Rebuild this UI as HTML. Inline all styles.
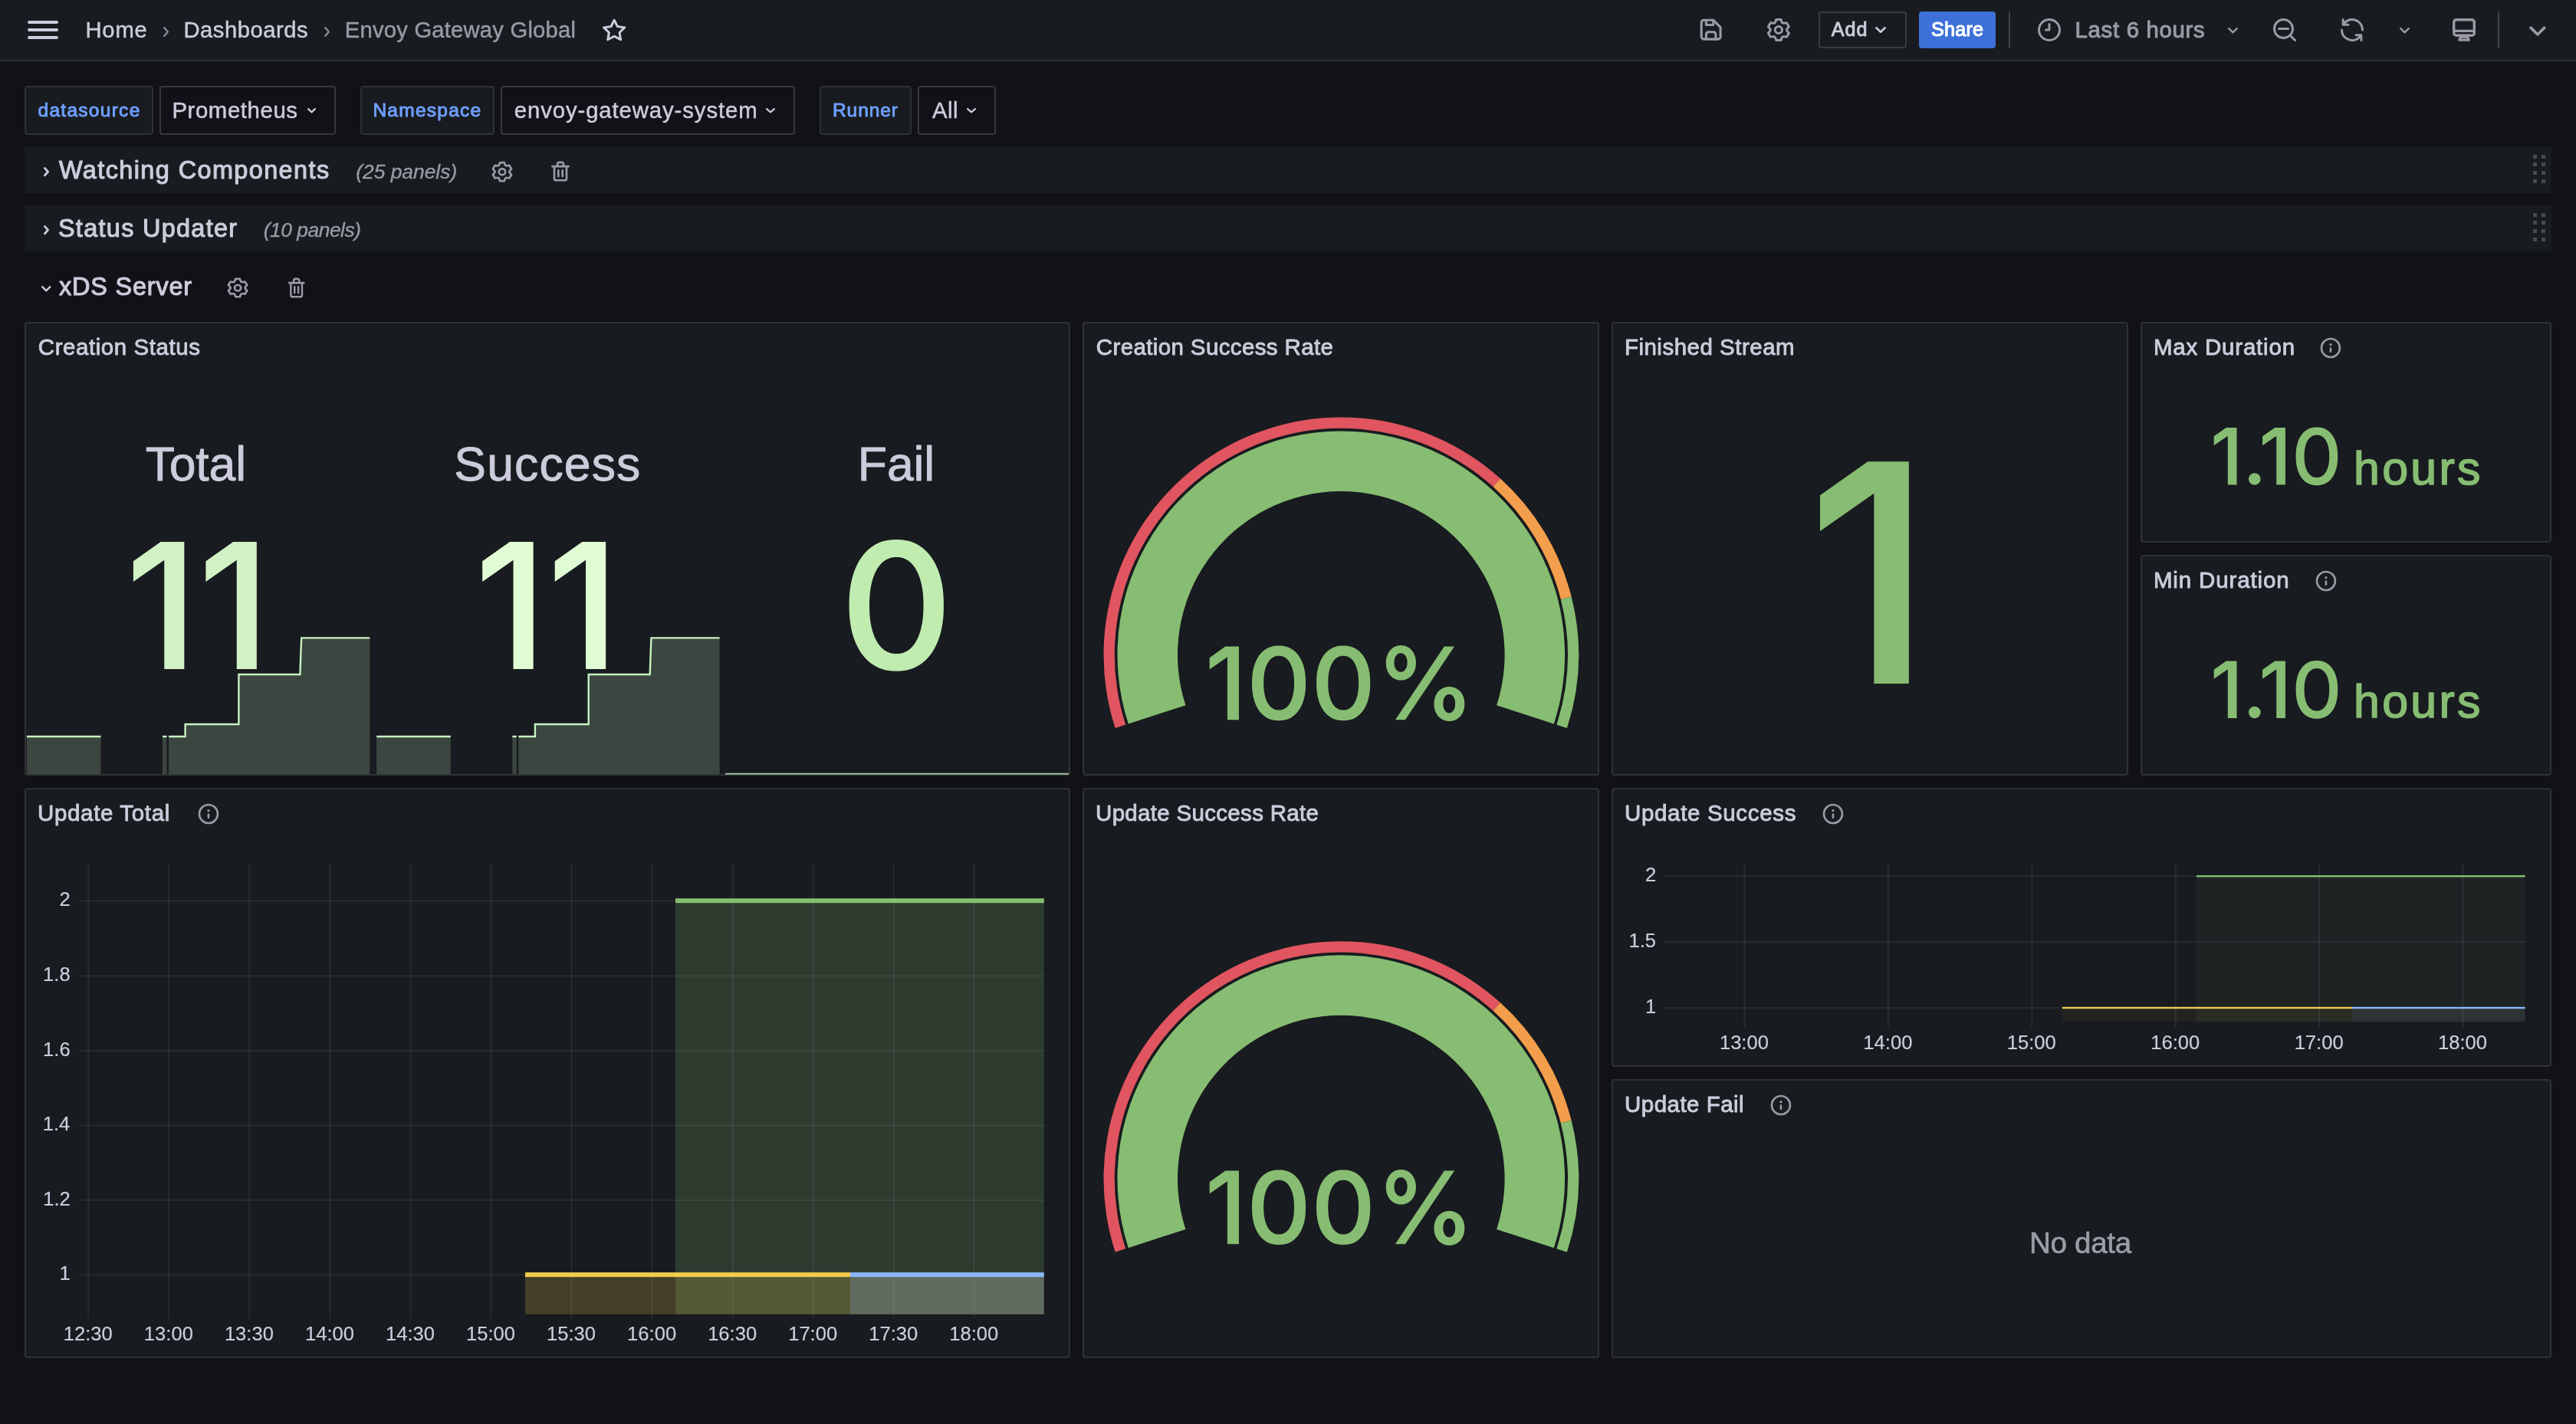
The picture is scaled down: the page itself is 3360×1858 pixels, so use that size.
<!DOCTYPE html><html><head><meta charset="utf-8"><title>Envoy Gateway Global - Dashboards - Grafana</title><style>html,body{margin:0;padding:0;background:#111217;}body{width:3360px;height:1858px;position:relative;overflow:hidden;font-family:"Liberation Sans",sans-serif;}text{font-family:"Liberation Sans",sans-serif;white-space:pre;}.r{position:absolute;display:block;}#root{position:absolute;left:0;top:0;width:3360px;height:1858px;will-change:transform;}</style></head><body><div id="root"><div class="r" style="left:0.00px;top:0.00px;width:3360.00px;height:78.00px;background:#181b1f;"></div><div class="r" style="left:0.00px;top:78.00px;width:3360.00px;height:2.00px;background:#2c2e33;"></div><div class="r" style="left:36.00px;top:26.70px;width:40.00px;height:4.60px;background:#ccccdc;border-radius:3px;"></div><div class="r" style="left:36.00px;top:36.80px;width:40.00px;height:4.60px;background:#ccccdc;border-radius:3px;"></div><div class="r" style="left:36.00px;top:46.70px;width:40.00px;height:4.60px;background:#ccccdc;border-radius:3px;"></div><svg class="r" style="left:0;top:0;overflow:visible" width="1" height="1"><text x="111.40" y="49.00" font-size="29.22" fill="#ccccdc" letter-spacing="0.821" stroke="#ccccdc" stroke-width="0.45" stroke-linejoin="round">Home</text></svg><svg class="r" style="left:208.50px;top:30.50px" width="15.00" height="21.00"><polyline points="5.10,5.10 9.90,10.50 5.10,15.90" fill="none" stroke="#8e8ea0" stroke-width="2.20" stroke-linecap="round" stroke-linejoin="round"/></svg><svg class="r" style="left:0;top:0;overflow:visible" width="1" height="1"><text x="239.40" y="49.00" font-size="29.22" fill="#ccccdc" letter-spacing="0.514" stroke="#ccccdc" stroke-width="0.45" stroke-linejoin="round">Dashboards</text></svg><svg class="r" style="left:418.50px;top:30.50px" width="15.00" height="21.00"><polyline points="5.10,5.10 9.90,10.50 5.10,15.90" fill="none" stroke="#8e8ea0" stroke-width="2.20" stroke-linecap="round" stroke-linejoin="round"/></svg><svg class="r" style="left:0;top:0;overflow:visible" width="1" height="1"><text x="449.80" y="49.00" font-size="29.22" fill="#9a9aa6" letter-spacing="0.209" stroke="#9a9aa6" stroke-width="0.45" stroke-linejoin="round">Envoy Gateway Global</text></svg><svg class="r" style="left:782.97px;top:21.15px;" width="36.36" height="35.90" viewBox="0 0 24 24" preserveAspectRatio="none"><path fill="#ccccdc" d="M22,9.67A1,1,0,0,0,21.14,9l-5.69-.83L12.9,3a1,1,0,0,0-1.8,0L8.55,8.16,2.86,9a1,1,0,0,0-.81.68,1,1,0,0,0,.25,1l4.13,4-1,5.68A1,1,0,0,0,6.9,21.44L12,18.77l5.1,2.67a.93.93,0,0,0,.46.12,1,1,0,0,0,.59-.19,1,1,0,0,0,.4-1l-1-5.68,4.130-4A1,1,0,0,0,22,9.67Zm-6.15,4a1,1,0,0,0-.29.88l.72,4.2-3.76-2a1.06,1.06,0,0,0-.94,0l-3.76,2,.72-4.2a1,1,0,0,0-.29-.88l-3-3,4.21-.61a1,1,0,0,0,.76-.55L12,5.7l1.88,3.82a1,1,0,0,0,.76.55l4.21.61Z"/></svg><svg class="r" style="left:2213.33px;top:20.33px;" width="37.33" height="37.33" viewBox="0 0 24 24" preserveAspectRatio="none"><path fill="#9a9aa6" d="M20.71,9.29l-6-6a1,1,0,0,0-.32-.21A1.09,1.09,0,0,0,14,3H6A3,3,0,0,0,3,6V18a3,3,0,0,0,3,3H18a3,3,0,0,0,3-3V10A1,1,0,0,0,20.71,9.29ZM9,5h4V7H9Zm6,14H9V16a1,1,0,0,1,1-1h4a1,1,0,0,1,1,1Zm4-1a1,1,0,0,1-1,1H17V16a3,3,0,0,0-3-3H10a3,3,0,0,0-3,3v3H6a1,1,0,0,1-1-1V6A1,1,0,0,1,6,5H7V8A1,1,0,0,0,8,9h6a1,1,0,0,0,1-1V6.41l4,4Z"/></svg><svg class="r" style="left:2302.13px;top:21.00px;" width="36.85" height="36.00" viewBox="0 0 24 24" preserveAspectRatio="none"><path fill="#9a9aa6" d="M19.9,12.66a1,1,0,0,1,0-1.32L21.18,9.9a1,1,0,0,0,.12-1.17l-2-3.46a1,1,0,0,0-1.07-.48l-1.88.38a1,1,0,0,1-1.15-.66l-.61-1.83A1,1,0,0,0,13.64,2h-4a1,1,0,0,0-1,.68L8.08,4.51a1,1,0,0,1-1.15.66L5,4.79A1,1,0,0,0,4,5.27L2,8.73A1,1,0,0,0,2.1,9.9l1.27,1.44a1,1,0,0,1,0,1.32L2.1,14.1A1,1,0,0,0,2,15.27l2,3.46a1,1,0,0,0,1.07.48l1.88-.38a1,1,0,0,1,1.15.66l.61,1.83a1,1,0,0,0,1,.68h4a1,1,0,0,0,.95-.68l.61-1.83a1,1,0,0,1,1.15-.66l1.88.38a1,1,0,0,0,1.07-.48l2-3.46a1,1,0,0,0-.12-1.17ZM18.41,14l.8.9-1.28,2.22-1.18-.24a3,3,0,0,0-3.450,2L12.92,20H10.36L10,18.86a3,3,0,0,0-3.45-2l-1.18.24L4.07,14.89l.8-.9a3,3,0,0,0,0-4l-.8-.9L5.35,6.89l1.18.24a3,3,0,0,0,3.45-2L10.36,4h2.56l.38,1.14a3,3,0,0,0,3.45,2l1.18-.24,1.28,2.22-.8.9A3,3,0,0,0,18.41,14ZM11.64,8a4,4,0,1,0,4,4A4,4,0,0,0,11.64,8Zm0,6a2,2,0,1,1,2-2A2,2,0,0,1,11.64,14Z"/></svg><div class="r" style="left:2372.00px;top:15.00px;width:115.00px;height:48.00px;border:2px solid #393b41;box-sizing:border-box;border-radius:4px;"></div><svg class="r" style="left:0;top:0;overflow:visible" width="1" height="1"><text x="2388.75" y="47.00" font-size="25.15" fill="#ccccdc" letter-spacing="0.964" stroke="#ccccdc" stroke-width="0.90" stroke-linejoin="round">Add</text></svg><svg class="r" style="left:2442.00px;top:31.00px" width="22.00" height="16.00"><polyline points="5.30,5.30 11.00,10.70 16.70,5.30" fill="none" stroke="#ccccdc" stroke-width="2.60" stroke-linecap="round" stroke-linejoin="round"/></svg><div class="r" style="left:2503.00px;top:15.00px;width:100.00px;height:48.00px;background:#3d71d9;border-radius:4px;"></div><svg class="r" style="left:0;top:0;overflow:visible" width="1" height="1"><text x="2519.06" y="47.00" font-size="25.15" fill="#ffffff" letter-spacing="0.240" stroke="#ffffff" stroke-width="1.10" stroke-linejoin="round">Share</text></svg><div class="r" style="left:2620.00px;top:15.00px;width:2.00px;height:48.00px;background:#414349;"></div><svg class="r" style="left:2655.00px;top:21.00px;" width="36.00" height="36.00" viewBox="0 0 24 24" preserveAspectRatio="none"><path fill="#9a9aa6" d="M12,2A10,10,0,1,0,22,12,10.01146,10.01146,0,0,0,12,2Zm0,18a8,8,0,1,1,8-8A8.00917,8.00917,0,0,1,12,20ZM12,6a1,1,0,0,0-1,1v4H9a1,1,0,0,0,0,2h3a1,1,0,0,0,1-1V7A1,1,0,0,0,12,6Z"/></svg><svg class="r" style="left:0;top:0;overflow:visible" width="1" height="1"><text x="2706.59" y="49.00" font-size="29.36" fill="#9a9aa6" letter-spacing="0.681" stroke="#9a9aa6" stroke-width="1.00" stroke-linejoin="round">Last 6 hours</text></svg><svg class="r" style="left:2901.50px;top:31.50px" width="21.00" height="15.50"><polyline points="5.20,5.20 10.50,10.30 15.80,5.20" fill="none" stroke="#9a9aa6" stroke-width="2.40" stroke-linecap="round" stroke-linejoin="round"/></svg><svg class="r" style="left:2962.00px;top:21.00px;" width="36.00" height="36.04" viewBox="0 0 24 24" preserveAspectRatio="none"><path fill="#9a9aa6" d="M21.71,20.29,18,16.61A9,9,0,1,0,16.61,18l3.68,3.68a1,1,0,0,0,1.42,0A1,1,0,0,0,21.71,20.29ZM11,18a7,7,0,1,1,7-7A7,7,0,0,1,11,18Zm4-8H7a1,1,0,0,0,0,2h8a1,1,0,0,0,0-2Z"/></svg><svg class="r" style="left:3050.00px;top:21.00px;" width="36.00" height="36.00" viewBox="0 0 24 24" preserveAspectRatio="none"><path fill="#9a9aa6" d="M19.91,15.51H15.38a1,1,0,0,0,0,2h2.4A8,8,0,0,1,4,12a1,1,0,0,0-2,0,10,10,0,0,0,16.88,7.23V21a1,1,0,0,0,2,0V16.5A1,1,0,0,0,19.91,15.51ZM12,2A10,10,0,0,0,5.12,4.77V3a1,1,0,0,0-2,0V7.5a1,1,0,0,0,1,1h4.5a1,1,0,0,0,0-2H6.22A8,8,0,0,1,20,12a1,1,0,0,0,2,0A10,10,0,0,0,12,2Z"/></svg><svg class="r" style="left:3125.50px;top:31.50px" width="21.00" height="15.50"><polyline points="5.20,5.20 10.50,10.30 15.80,5.20" fill="none" stroke="#9a9aa6" stroke-width="2.40" stroke-linecap="round" stroke-linejoin="round"/></svg><svg class="r" style="left:0;top:0;overflow:visible" width="1" height="1"><rect x="3200.7" y="25.7" width="26.6" height="20.5" rx="3.2" fill="none" stroke="#9a9aa6" stroke-width="3.4"/><rect x="3200.7" y="38.8" width="26.6" height="3.2" fill="#9a9aa6"/><path d="M3209.6,48.2 L3218.4,48.2 L3220.3,52.1 L3207.7,52.1 Z" fill="none" stroke="#9a9aa6" stroke-width="3.2" stroke-linejoin="round"/></svg><div class="r" style="left:3258.00px;top:15.00px;width:2.00px;height:48.00px;background:#414349;"></div><svg class="r" style="left:0;top:0;overflow:visible" width="1" height="1"><polyline points="3301.1,36.2 3309.9,45.0 3318.7,36.2" fill="none" stroke="#9a9aa6" stroke-width="3.7" stroke-linecap="round" stroke-linejoin="round"/></svg><div class="r" style="left:32.00px;top:112.00px;width:168.00px;height:64.00px;background:#181b1f;border:2px solid #2f3136;box-sizing:border-box;border-radius:4px;"></div><svg class="r" style="left:0;top:0;overflow:visible" width="1" height="1"><text x="49.47" y="151.70" font-size="24.56" fill="#6e9fff" letter-spacing="1.265" stroke="#6e9fff" stroke-width="0.95" stroke-linejoin="round">datasource</text></svg><div class="r" style="left:208.00px;top:112.00px;width:230.00px;height:64.00px;background:#111217;border:2px solid #37383d;box-sizing:border-box;border-radius:4px;"></div><svg class="r" style="left:0;top:0;overflow:visible" width="1" height="1"><text x="224.39" y="153.60" font-size="29.36" fill="#ccccdc" letter-spacing="0.597" stroke="#ccccdc" stroke-width="0.50" stroke-linejoin="round">Prometheus</text></svg><svg class="r" style="left:396.50px;top:137.00px" width="19.00" height="14.50"><polyline points="5.10,5.10 9.50,9.40 13.90,5.10" fill="none" stroke="#ccccdc" stroke-width="2.20" stroke-linecap="round" stroke-linejoin="round"/></svg><div class="r" style="left:470.00px;top:112.00px;width:175.00px;height:64.00px;background:#181b1f;border:2px solid #2f3136;box-sizing:border-box;border-radius:4px;"></div><svg class="r" style="left:0;top:0;overflow:visible" width="1" height="1"><text x="486.38" y="151.70" font-size="24.56" fill="#6e9fff" letter-spacing="1.229" stroke="#6e9fff" stroke-width="0.95" stroke-linejoin="round">Namespace</text></svg><div class="r" style="left:653.00px;top:112.00px;width:384.00px;height:64.00px;background:#111217;border:2px solid #37383d;box-sizing:border-box;border-radius:4px;"></div><svg class="r" style="left:0;top:0;overflow:visible" width="1" height="1"><text x="670.75" y="153.60" font-size="29.36" fill="#ccccdc" letter-spacing="0.876" stroke="#ccccdc" stroke-width="0.50" stroke-linejoin="round">envoy-gateway-system</text></svg><svg class="r" style="left:995.00px;top:137.00px" width="20.00" height="14.50"><polyline points="5.10,5.10 10.00,9.40 14.90,5.10" fill="none" stroke="#ccccdc" stroke-width="2.20" stroke-linecap="round" stroke-linejoin="round"/></svg><div class="r" style="left:1069.00px;top:112.00px;width:120.00px;height:64.00px;background:#181b1f;border:2px solid #2f3136;box-sizing:border-box;border-radius:4px;"></div><svg class="r" style="left:0;top:0;overflow:visible" width="1" height="1"><text x="1085.98" y="151.70" font-size="24.56" fill="#6e9fff" letter-spacing="0.892" stroke="#6e9fff" stroke-width="0.95" stroke-linejoin="round">Runner</text></svg><div class="r" style="left:1197.00px;top:112.00px;width:102.00px;height:64.00px;background:#111217;border:2px solid #37383d;box-sizing:border-box;border-radius:4px;"></div><svg class="r" style="left:0;top:0;overflow:visible" width="1" height="1"><text x="1215.94" y="153.60" font-size="29.36" fill="#ccccdc" letter-spacing="0.446" stroke="#ccccdc" stroke-width="0.50" stroke-linejoin="round">All</text></svg><svg class="r" style="left:1257.00px;top:137.00px" width="20.00" height="14.50"><polyline points="5.10,5.10 10.00,9.40 14.90,5.10" fill="none" stroke="#ccccdc" stroke-width="2.20" stroke-linecap="round" stroke-linejoin="round"/></svg><div class="r" style="left:32.00px;top:192.00px;width:3296.00px;height:60.00px;background:#181b1f;"></div><svg class="r" style="left:52.80px;top:214.00px" width="15.00" height="20.20"><polyline points="5.40,5.40 9.60,10.10 5.40,14.80" fill="none" stroke="#ccccdc" stroke-width="2.80" stroke-linecap="round" stroke-linejoin="round"/></svg><svg class="r" style="left:0;top:0;overflow:visible" width="1" height="1"><text x="77.06" y="232.70" font-size="32.41" fill="#ccccdc" letter-spacing="1.412" stroke="#ccccdc" stroke-width="1.10" stroke-linejoin="round">Watching Components</text></svg><svg class="r" style="left:0;top:0;overflow:visible" width="1" height="1"><text x="464.26" y="232.90" font-size="26.45" fill="#9a9aa6" letter-spacing="-0.033" font-style="italic" stroke="#9a9aa6" stroke-width="0.35" stroke-linejoin="round">(25 panels)</text></svg><svg class="r" style="left:638.94px;top:207.81px;" width="32.92" height="32.28" viewBox="0 0 24 24" preserveAspectRatio="none"><path fill="#9a9aa6" d="M19.9,12.66a1,1,0,0,1,0-1.32L21.18,9.9a1,1,0,0,0,.12-1.17l-2-3.46a1,1,0,0,0-1.07-.48l-1.88.38a1,1,0,0,1-1.15-.66l-.61-1.83A1,1,0,0,0,13.64,2h-4a1,1,0,0,0-1,.68L8.08,4.51a1,1,0,0,1-1.15.66L5,4.79A1,1,0,0,0,4,5.27L2,8.73A1,1,0,0,0,2.1,9.9l1.27,1.44a1,1,0,0,1,0,1.32L2.1,14.1A1,1,0,0,0,2,15.27l2,3.46a1,1,0,0,0,1.07.48l1.88-.38a1,1,0,0,1,1.15.66l.61,1.83a1,1,0,0,0,1,.68h4a1,1,0,0,0,.95-.68l.61-1.83a1,1,0,0,1,1.15-.66l1.88.38a1,1,0,0,0,1.07-.48l2-3.46a1,1,0,0,0-.12-1.17ZM18.41,14l.8.9-1.28,2.22-1.18-.24a3,3,0,0,0-3.450,2L12.92,20H10.36L10,18.86a3,3,0,0,0-3.45-2l-1.18.24L4.07,14.89l.8-.9a3,3,0,0,0,0-4l-.8-.9L5.35,6.89l1.18.24a3,3,0,0,0,3.45-2L10.36,4h2.56l.38,1.14a3,3,0,0,0,3.45,2l1.18-.24,1.28,2.22-.8.9A3,3,0,0,0,18.41,14ZM11.64,8a4,4,0,1,0,4,4A4,4,0,0,0,11.64,8Zm0,6a2,2,0,1,1,2-2A2,2,0,0,1,11.64,14Z"/></svg><svg class="r" style="left:715.00px;top:208.40px;" width="32.00" height="31.20" viewBox="0 0 24 24" preserveAspectRatio="none"><path fill="#9a9aa6" d="M10,18a1,1,0,0,0,1-1V11a1,1,0,0,0-2,0v6A1,1,0,0,0,10,18ZM20,6H16V5a3,3,0,0,0-3-3H11A3,3,0,0,0,8,5V6H4A1,1,0,0,0,4,8H5V19a3,3,0,0,0,3,3h8a3,3,0,0,0,3-3V8h1a1,1,0,0,0,0-2ZM10,5a1,1,0,0,1,1-1h2a1,1,0,0,1,1,1V6H10Zm7,14a1,1,0,0,1-1,1H8a1,1,0,0,1-1-1V8H17Zm-3-1a1,1,0,0,0,1-1V11a1,1,0,0,0-2,0v6A1,1,0,0,0,14,18Z"/></svg><div class="r" style="left:3304.00px;top:201.50px;width:5.30px;height:5.30px;background:#494a4e;"></div><div class="r" style="left:3314.50px;top:201.50px;width:5.30px;height:5.30px;background:#494a4e;"></div><div class="r" style="left:3304.00px;top:212.20px;width:5.30px;height:5.30px;background:#494a4e;"></div><div class="r" style="left:3314.50px;top:212.20px;width:5.30px;height:5.30px;background:#494a4e;"></div><div class="r" style="left:3304.00px;top:222.90px;width:5.30px;height:5.30px;background:#494a4e;"></div><div class="r" style="left:3314.50px;top:222.90px;width:5.30px;height:5.30px;background:#494a4e;"></div><div class="r" style="left:3304.00px;top:233.60px;width:5.30px;height:5.30px;background:#494a4e;"></div><div class="r" style="left:3314.50px;top:233.60px;width:5.30px;height:5.30px;background:#494a4e;"></div><div class="r" style="left:32.00px;top:268.00px;width:3296.00px;height:60.00px;background:#181b1f;"></div><svg class="r" style="left:52.80px;top:290.00px" width="15.00" height="20.20"><polyline points="5.40,5.40 9.60,10.10 5.40,14.80" fill="none" stroke="#ccccdc" stroke-width="2.80" stroke-linecap="round" stroke-linejoin="round"/></svg><svg class="r" style="left:0;top:0;overflow:visible" width="1" height="1"><text x="75.93" y="308.70" font-size="32.41" fill="#ccccdc" letter-spacing="1.308" stroke="#ccccdc" stroke-width="1.10" stroke-linejoin="round">Status Updater</text></svg><svg class="r" style="left:0;top:0;overflow:visible" width="1" height="1"><text x="343.76" y="308.90" font-size="26.45" fill="#9a9aa6" letter-spacing="-0.503" font-style="italic" stroke="#9a9aa6" stroke-width="0.35" stroke-linejoin="round">(10 panels)</text></svg><div class="r" style="left:3304.00px;top:277.50px;width:5.30px;height:5.30px;background:#494a4e;"></div><div class="r" style="left:3314.50px;top:277.50px;width:5.30px;height:5.30px;background:#494a4e;"></div><div class="r" style="left:3304.00px;top:288.20px;width:5.30px;height:5.30px;background:#494a4e;"></div><div class="r" style="left:3314.50px;top:288.20px;width:5.30px;height:5.30px;background:#494a4e;"></div><div class="r" style="left:3304.00px;top:298.90px;width:5.30px;height:5.30px;background:#494a4e;"></div><div class="r" style="left:3314.50px;top:298.90px;width:5.30px;height:5.30px;background:#494a4e;"></div><div class="r" style="left:3304.00px;top:309.60px;width:5.30px;height:5.30px;background:#494a4e;"></div><div class="r" style="left:3314.50px;top:309.60px;width:5.30px;height:5.30px;background:#494a4e;"></div><svg class="r" style="left:50.00px;top:368.50px" width="20.50" height="15.50"><polyline points="5.20,5.20 10.25,10.30 15.30,5.20" fill="none" stroke="#ccccdc" stroke-width="2.40" stroke-linecap="round" stroke-linejoin="round"/></svg><svg class="r" style="left:0;top:0;overflow:visible" width="1" height="1"><text x="77.04" y="384.70" font-size="32.41" fill="#ccccdc" letter-spacing="0.822" stroke="#ccccdc" stroke-width="1.10" stroke-linejoin="round">xDS Server</text></svg><svg class="r" style="left:294.42px;top:360.40px;" width="33.16" height="31.20" viewBox="0 0 24 24" preserveAspectRatio="none"><path fill="#9a9aa6" d="M19.9,12.66a1,1,0,0,1,0-1.32L21.18,9.9a1,1,0,0,0,.12-1.17l-2-3.46a1,1,0,0,0-1.07-.48l-1.88.38a1,1,0,0,1-1.15-.66l-.61-1.83A1,1,0,0,0,13.64,2h-4a1,1,0,0,0-1,.68L8.08,4.51a1,1,0,0,1-1.15.66L5,4.79A1,1,0,0,0,4,5.27L2,8.73A1,1,0,0,0,2.1,9.9l1.27,1.44a1,1,0,0,1,0,1.32L2.1,14.1A1,1,0,0,0,2,15.27l2,3.46a1,1,0,0,0,1.07.48l1.88-.38a1,1,0,0,1,1.15.66l.61,1.83a1,1,0,0,0,1,.68h4a1,1,0,0,0,.95-.68l.61-1.83a1,1,0,0,1,1.15-.66l1.88.38a1,1,0,0,0,1.07-.48l2-3.46a1,1,0,0,0-.12-1.17ZM18.41,14l.8.9-1.28,2.22-1.18-.24a3,3,0,0,0-3.450,2L12.92,20H10.36L10,18.86a3,3,0,0,0-3.45-2l-1.18.24L4.07,14.89l.8-.9a3,3,0,0,0,0-4l-.8-.9L5.35,6.89l1.18.24a3,3,0,0,0,3.45-2L10.36,4h2.56l.38,1.14a3,3,0,0,0,3.45,2l1.18-.24,1.28,2.22-.8.9A3,3,0,0,0,18.41,14ZM11.64,8a4,4,0,1,0,4,4A4,4,0,0,0,11.64,8Zm0,6a2,2,0,1,1,2-2A2,2,0,0,1,11.64,14Z"/></svg><svg class="r" style="left:372.33px;top:360.40px;" width="29.33" height="31.20" viewBox="0 0 24 24" preserveAspectRatio="none"><path fill="#9a9aa6" d="M10,18a1,1,0,0,0,1-1V11a1,1,0,0,0-2,0v6A1,1,0,0,0,10,18ZM20,6H16V5a3,3,0,0,0-3-3H11A3,3,0,0,0,8,5V6H4A1,1,0,0,0,4,8H5V19a3,3,0,0,0,3,3h8a3,3,0,0,0,3-3V8h1a1,1,0,0,0,0-2ZM10,5a1,1,0,0,1,1-1h2a1,1,0,0,1,1,1V6H10Zm7,14a1,1,0,0,1-1,1H8a1,1,0,0,1-1-1V8H17Zm-3-1a1,1,0,0,0,1-1V11a1,1,0,0,0-2,0v6A1,1,0,0,0,14,18Z"/></svg><div class="r" style="left:32.00px;top:420.00px;width:1364.00px;height:592.00px;background:#181b1f;border:2px solid #2f3135;box-sizing:border-box;border-radius:4px;"></div><svg class="r" style="left:0;top:0;overflow:visible" width="1" height="1"><text x="49.80" y="463.30" font-size="29.51" fill="#ccccdc" letter-spacing="0.564" stroke="#ccccdc" stroke-width="0.90" stroke-linejoin="round">Creation Status</text></svg><div class="r" style="left:1412.00px;top:420.00px;width:674.00px;height:592.00px;background:#181b1f;border:2px solid #2f3135;box-sizing:border-box;border-radius:4px;"></div><svg class="r" style="left:0;top:0;overflow:visible" width="1" height="1"><text x="1429.80" y="463.30" font-size="29.51" fill="#ccccdc" letter-spacing="0.373" stroke="#ccccdc" stroke-width="0.90" stroke-linejoin="round">Creation Success Rate</text></svg><div class="r" style="left:2102.00px;top:420.00px;width:674.00px;height:592.00px;background:#181b1f;border:2px solid #2f3135;box-sizing:border-box;border-radius:4px;"></div><svg class="r" style="left:0;top:0;overflow:visible" width="1" height="1"><text x="2118.88" y="463.30" font-size="29.51" fill="#ccccdc" letter-spacing="0.496" stroke="#ccccdc" stroke-width="0.90" stroke-linejoin="round">Finished Stream</text></svg><div class="r" style="left:2792.00px;top:420.00px;width:536.00px;height:288.00px;background:#181b1f;border:2px solid #2f3135;box-sizing:border-box;border-radius:4px;"></div><svg class="r" style="left:0;top:0;overflow:visible" width="1" height="1"><text x="2808.88" y="463.30" font-size="29.51" fill="#ccccdc" letter-spacing="0.797" stroke="#ccccdc" stroke-width="0.90" stroke-linejoin="round">Max Duration</text></svg><svg class="r" style="left:3023.94px;top:438.03px;" width="31.92" height="32.04" viewBox="0 0 24 24" preserveAspectRatio="none"><path fill="#9a9aa6" d="M12,2A10,10,0,1,0,22,12,10.01114,10.01114,0,0,0,12,2Zm0,18a8,8,0,1,1,8-8A8.00917,8.00917,0,0,1,12,20Zm0-8.5a1,1,0,0,0-1,1v3a1,1,0,0,0,2,0v-3A1,1,0,0,0,12,11.5Zm0-4a1.25,1.25,0,1,0,1.25,1.25A1.25,1.25,0,0,0,12,7.5Z"/></svg><div class="r" style="left:2792.00px;top:724.00px;width:536.00px;height:288.00px;background:#181b1f;border:2px solid #2f3135;box-sizing:border-box;border-radius:4px;"></div><svg class="r" style="left:0;top:0;overflow:visible" width="1" height="1"><text x="2808.88" y="767.30" font-size="29.51" fill="#ccccdc" letter-spacing="0.861" stroke="#ccccdc" stroke-width="0.90" stroke-linejoin="round">Min Duration</text></svg><svg class="r" style="left:3017.74px;top:742.03px;" width="31.92" height="32.04" viewBox="0 0 24 24" preserveAspectRatio="none"><path fill="#9a9aa6" d="M12,2A10,10,0,1,0,22,12,10.01114,10.01114,0,0,0,12,2Zm0,18a8,8,0,1,1,8-8A8.00917,8.00917,0,0,1,12,20Zm0-8.5a1,1,0,0,0-1,1v3a1,1,0,0,0,2,0v-3A1,1,0,0,0,12,11.5Zm0-4a1.25,1.25,0,1,0,1.25,1.25A1.25,1.25,0,0,0,12,7.5Z"/></svg><div class="r" style="left:32.00px;top:1028.00px;width:1364.00px;height:744.00px;background:#181b1f;border:2px solid #2f3135;box-sizing:border-box;border-radius:4px;"></div><svg class="r" style="left:0;top:0;overflow:visible" width="1" height="1"><text x="49.02" y="1071.30" font-size="29.51" fill="#ccccdc" letter-spacing="0.647" stroke="#ccccdc" stroke-width="0.90" stroke-linejoin="round">Update Total</text></svg><svg class="r" style="left:256.34px;top:1046.03px;" width="31.92" height="32.04" viewBox="0 0 24 24" preserveAspectRatio="none"><path fill="#9a9aa6" d="M12,2A10,10,0,1,0,22,12,10.01114,10.01114,0,0,0,12,2Zm0,18a8,8,0,1,1,8-8A8.00917,8.00917,0,0,1,12,20Zm0-8.5a1,1,0,0,0-1,1v3a1,1,0,0,0,2,0v-3A1,1,0,0,0,12,11.5Zm0-4a1.25,1.25,0,1,0,1.25,1.25A1.25,1.25,0,0,0,12,7.5Z"/></svg><div class="r" style="left:1412.00px;top:1028.00px;width:674.00px;height:744.00px;background:#181b1f;border:2px solid #2f3135;box-sizing:border-box;border-radius:4px;"></div><svg class="r" style="left:0;top:0;overflow:visible" width="1" height="1"><text x="1429.02" y="1071.30" font-size="29.51" fill="#ccccdc" letter-spacing="0.312" stroke="#ccccdc" stroke-width="0.90" stroke-linejoin="round">Update Success Rate</text></svg><div class="r" style="left:2102.00px;top:1028.00px;width:1226.00px;height:364.00px;background:#181b1f;border:2px solid #2f3135;box-sizing:border-box;border-radius:4px;"></div><svg class="r" style="left:0;top:0;overflow:visible" width="1" height="1"><text x="2119.02" y="1071.30" font-size="29.51" fill="#ccccdc" letter-spacing="0.661" stroke="#ccccdc" stroke-width="0.90" stroke-linejoin="round">Update Success</text></svg><svg class="r" style="left:2374.54px;top:1046.03px;" width="31.92" height="32.04" viewBox="0 0 24 24" preserveAspectRatio="none"><path fill="#9a9aa6" d="M12,2A10,10,0,1,0,22,12,10.01114,10.01114,0,0,0,12,2Zm0,18a8,8,0,1,1,8-8A8.00917,8.00917,0,0,1,12,20Zm0-8.5a1,1,0,0,0-1,1v3a1,1,0,0,0,2,0v-3A1,1,0,0,0,12,11.5Zm0-4a1.25,1.25,0,1,0,1.25,1.25A1.25,1.25,0,0,0,12,7.5Z"/></svg><div class="r" style="left:2102.00px;top:1408.00px;width:1226.00px;height:364.00px;background:#181b1f;border:2px solid #2f3135;box-sizing:border-box;border-radius:4px;"></div><svg class="r" style="left:0;top:0;overflow:visible" width="1" height="1"><text x="2119.02" y="1451.30" font-size="29.51" fill="#ccccdc" letter-spacing="0.476" stroke="#ccccdc" stroke-width="0.90" stroke-linejoin="round">Update Fail</text></svg><svg class="r" style="left:2306.94px;top:1426.03px;" width="31.92" height="32.04" viewBox="0 0 24 24" preserveAspectRatio="none"><path fill="#9a9aa6" d="M12,2A10,10,0,1,0,22,12,10.01114,10.01114,0,0,0,12,2Zm0,18a8,8,0,1,1,8-8A8.00917,8.00917,0,0,1,12,20Zm0-8.5a1,1,0,0,0-1,1v3a1,1,0,0,0,2,0v-3A1,1,0,0,0,12,11.5Zm0-4a1.25,1.25,0,1,0,1.25,1.25A1.25,1.25,0,0,0,12,7.5Z"/></svg><svg class="r" style="left:0;top:0;overflow:visible" width="1" height="1"><text x="189.70" y="626.80" font-size="62.50" fill="#ccccdc" letter-spacing="-0.165" stroke="#ccccdc" stroke-width="0.90" stroke-linejoin="round">Total</text></svg><svg class="r" style="left:0;top:0;overflow:visible" width="1" height="1"><text x="592.36" y="626.80" font-size="62.50" fill="#ccccdc" letter-spacing="1.132" stroke="#ccccdc" stroke-width="0.90" stroke-linejoin="round">Success</text></svg><svg class="r" style="left:0;top:0;overflow:visible" width="1" height="1"><text x="1118.87" y="626.80" font-size="62.50" fill="#ccccdc" letter-spacing="-0.133" stroke="#ccccdc" stroke-width="0.90" stroke-linejoin="round">Fail</text></svg><svg class="r" style="left:0;top:0" width="1400" height="1020"><path d="M34.9,1010.0 L34.9,961.0 L131.5,961.0 L131.5,1010.0 Z" fill="rgba(200,242,194,0.205)"/><path d="M34.9,961.0 L131.5,961.0" fill="none" stroke="#c8f2c2" stroke-width="2.4"/><path d="M212.0,1010.0 L212.0,961.0 L217.5,961.0 L217.5,1010.0 Z" fill="rgba(200,242,194,0.205)"/><path d="M212.0,961.0 L217.5,961.0" fill="none" stroke="#c8f2c2" stroke-width="2.4"/><path d="M220.0,1010.0 L220.0,961.0 L241.6,961.0 L241.6,945.0 L311.4,945.0 L311.4,880.0 L391.4,880.0 L392.5,848.5 L393.2,832.4 L482.3,832.4 L482.3,1010.0 Z" fill="rgba(200,242,194,0.205)"/><path d="M220.0,961.0 L241.6,961.0 L241.6,945.0 L311.4,945.0 L311.4,880.0 L391.4,880.0 L392.5,848.5 L393.2,832.4 L482.3,832.4" fill="none" stroke="#c8f2c2" stroke-width="2.4"/><path d="M491.2,1010.0 L491.2,961.0 L587.8,961.0 L587.8,1010.0 Z" fill="rgba(200,242,194,0.205)"/><path d="M491.2,961.0 L587.8,961.0" fill="none" stroke="#c8f2c2" stroke-width="2.4"/><path d="M668.3,1010.0 L668.3,961.0 L673.8,961.0 L673.8,1010.0 Z" fill="rgba(200,242,194,0.205)"/><path d="M668.3,961.0 L673.8,961.0" fill="none" stroke="#c8f2c2" stroke-width="2.4"/><path d="M676.3,1010.0 L676.3,961.0 L697.9,961.0 L697.9,945.0 L767.7,945.0 L767.7,880.0 L847.7,880.0 L848.8,848.5 L849.5,832.4 L938.6,832.4 L938.6,1010.0 Z" fill="rgba(200,242,194,0.205)"/><path d="M676.3,961.0 L697.9,961.0 L697.9,945.0 L767.7,945.0 L767.7,880.0 L847.7,880.0 L848.8,848.5 L849.5,832.4 L938.6,832.4" fill="none" stroke="#c8f2c2" stroke-width="2.4"/><path d="M946,1009.6 L1394,1009.6" stroke="#c8f2c2" stroke-width="1.8" opacity="0.85"/></svg><svg class="r" style="left:0;top:0;overflow:visible" width="1" height="1"><path fill-rule="evenodd" fill="#d2f1c5" d="M209.61,706.90 L240.34,706.90 L240.34,873.00 L214.26,873.00 L214.26,730.65 L173.90,758.89 L173.90,732.15 Z M304.11,706.90 L334.84,706.90 L334.84,873.00 L308.76,873.00 L308.76,730.65 L268.40,758.89 L268.40,732.15 Z"/></svg><svg class="r" style="left:0;top:0;overflow:visible" width="1" height="1"><path fill-rule="evenodd" fill="#e0fcd4" d="M664.91,706.90 L695.64,706.90 L695.64,873.00 L669.56,873.00 L669.56,730.65 L629.20,758.89 L629.20,732.15 Z M759.41,706.90 L790.14,706.90 L790.14,873.00 L764.06,873.00 L764.06,730.65 L723.70,758.89 L723.70,732.15 Z"/></svg><svg class="r" style="left:0;top:0;overflow:visible" width="1" height="1"><path fill-rule="evenodd" fill="#c0ecb0" d="M1230.90,789.85 L1230.78,797.45 L1230.43,803.90 L1229.85,809.93 L1229.03,815.67 L1227.98,821.15 L1226.71,826.40 L1225.21,831.42 L1223.50,836.21 L1221.57,840.76 L1219.43,845.08 L1217.09,849.14 L1214.55,852.94 L1211.82,856.47 L1208.91,859.73 L1205.81,862.71 L1202.54,865.40 L1199.10,867.78 L1195.50,869.87 L1191.73,871.64 L1187.79,873.09 L1183.67,874.23 L1179.34,875.05 L1174.71,875.54 L1169.25,875.70 L1163.79,875.54 L1159.16,875.05 L1154.83,874.23 L1150.71,873.09 L1146.77,871.64 L1143.00,869.87 L1139.40,867.78 L1135.96,865.40 L1132.69,862.71 L1129.59,859.73 L1126.68,856.47 L1123.95,852.94 L1121.41,849.14 L1119.07,845.08 L1116.93,840.76 L1115.00,836.21 L1113.29,831.42 L1111.79,826.40 L1110.52,821.15 L1109.47,815.67 L1108.65,809.93 L1108.07,803.90 L1107.72,797.45 L1107.60,789.85 L1107.72,782.25 L1108.07,775.80 L1108.65,769.77 L1109.47,764.03 L1110.52,758.55 L1111.79,753.30 L1113.29,748.28 L1115.00,743.49 L1116.93,738.94 L1119.07,734.62 L1121.41,730.56 L1123.95,726.76 L1126.68,723.23 L1129.59,719.97 L1132.69,716.99 L1135.96,714.30 L1139.40,711.92 L1143.00,709.83 L1146.77,708.06 L1150.71,706.61 L1154.83,705.47 L1159.16,704.65 L1163.79,704.16 L1169.25,704.00 L1174.71,704.16 L1179.34,704.65 L1183.67,705.47 L1187.79,706.61 L1191.73,708.06 L1195.50,709.83 L1199.10,711.92 L1202.54,714.30 L1205.81,716.99 L1208.91,719.97 L1211.82,723.23 L1214.55,726.76 L1217.09,730.56 L1219.43,734.62 L1221.57,738.94 L1223.50,743.49 L1225.21,748.28 L1226.71,753.30 L1227.98,758.55 L1229.03,764.03 L1229.85,769.77 L1230.43,775.80 L1230.78,782.25 Z M1204.50,790.00 L1204.43,784.42 L1204.23,779.69 L1203.90,775.26 L1203.43,771.05 L1202.83,767.03 L1202.10,763.18 L1201.25,759.49 L1200.27,755.98 L1199.17,752.64 L1197.94,749.47 L1196.61,746.49 L1195.15,743.70 L1193.59,741.11 L1191.93,738.72 L1190.16,736.53 L1188.29,734.56 L1186.32,732.81 L1184.26,731.28 L1182.10,729.98 L1179.85,728.91 L1177.50,728.08 L1175.02,727.48 L1172.37,727.12 L1169.25,727.00 L1166.13,727.12 L1163.48,727.48 L1161.00,728.08 L1158.65,728.91 L1156.40,729.98 L1154.24,731.28 L1152.18,732.81 L1150.21,734.56 L1148.34,736.53 L1146.57,738.72 L1144.91,741.11 L1143.35,743.70 L1141.89,746.49 L1140.56,749.47 L1139.33,752.64 L1138.23,755.98 L1137.25,759.49 L1136.40,763.18 L1135.67,767.03 L1135.07,771.05 L1134.60,775.26 L1134.27,779.69 L1134.07,784.42 L1134.00,790.00 L1134.07,795.58 L1134.27,800.31 L1134.60,804.74 L1135.07,808.95 L1135.67,812.97 L1136.40,816.82 L1137.25,820.51 L1138.23,824.02 L1139.33,827.36 L1140.56,830.53 L1141.89,833.51 L1143.35,836.30 L1144.91,838.89 L1146.57,841.28 L1148.34,843.47 L1150.21,845.44 L1152.18,847.19 L1154.24,848.72 L1156.40,850.02 L1158.65,851.09 L1161.00,851.92 L1163.48,852.52 L1166.13,852.88 L1169.25,853.00 L1172.37,852.88 L1175.02,852.52 L1177.50,851.92 L1179.85,851.09 L1182.10,850.02 L1184.26,848.72 L1186.32,847.19 L1188.29,845.44 L1190.16,843.47 L1191.93,841.28 L1193.59,838.89 L1195.15,836.30 L1196.61,833.51 L1197.94,830.53 L1199.17,827.36 L1200.27,824.02 L1201.25,820.51 L1202.10,816.82 L1202.83,812.97 L1203.43,808.95 L1203.90,804.74 L1204.23,800.31 L1204.43,795.58 Z"/></svg><svg class="r" style="left:0;top:0" width="3360" height="1858"><path d="M1454.66,950.03 A309.80,309.80 0 0 1 1957.08,624.51 L1947.49,635.12 A295.50,295.50 0 0 0 1468.26,945.61 Z" fill="#e0555f"/><path d="M1957.08,624.51 A309.80,309.80 0 0 1 2049.66,778.39 L2035.79,781.89 A295.50,295.50 0 0 0 1947.49,635.12 Z" fill="#f29e4c"/><path d="M2049.66,778.39 A309.80,309.80 0 0 1 2043.94,950.03 L2030.34,945.61 A295.50,295.50 0 0 0 2035.79,781.89 Z" fill="#86bd72"/><path d="M1471.78,944.47 A291.80,291.80 0 1 1 2026.82,944.47 L1952.16,920.21 A213.30,213.30 0 1 0 1546.44,920.21 Z" fill="#86bd72"/></svg><svg class="r" style="left:0;top:0;overflow:visible" width="1" height="1"><path fill-rule="evenodd" fill="#86bd72" d="M1598.25,843.60 L1615.94,843.60 L1615.94,939.20 L1600.93,939.20 L1600.93,857.27 L1577.70,873.52 L1577.70,858.13 Z"/></svg><svg class="r" style="left:0;top:0;overflow:visible" width="1" height="1"><path fill-rule="evenodd" fill="#86bd72" d="M1703.10,891.30 L1703.03,895.63 L1702.83,899.30 L1702.50,902.74 L1702.04,906.01 L1701.44,909.13 L1700.72,912.12 L1699.87,914.98 L1698.89,917.71 L1697.80,920.30 L1696.58,922.76 L1695.25,925.07 L1693.81,927.24 L1692.25,929.25 L1690.60,931.11 L1688.84,932.80 L1686.98,934.33 L1685.02,935.69 L1682.97,936.88 L1680.83,937.89 L1678.59,938.72 L1676.25,939.36 L1673.79,939.83 L1671.15,940.11 L1668.05,940.20 L1664.95,940.11 L1662.31,939.83 L1659.85,939.36 L1657.51,938.72 L1655.27,937.89 L1653.13,936.88 L1651.08,935.69 L1649.12,934.33 L1647.26,932.80 L1645.50,931.11 L1643.85,929.25 L1642.29,927.24 L1640.85,925.07 L1639.52,922.76 L1638.30,920.30 L1637.21,917.71 L1636.23,914.98 L1635.38,912.12 L1634.66,909.13 L1634.06,906.01 L1633.60,902.74 L1633.27,899.30 L1633.07,895.63 L1633.00,891.30 L1633.07,886.97 L1633.27,883.30 L1633.60,879.86 L1634.06,876.59 L1634.66,873.47 L1635.38,870.48 L1636.23,867.62 L1637.21,864.89 L1638.30,862.30 L1639.52,859.84 L1640.85,857.53 L1642.29,855.36 L1643.85,853.35 L1645.50,851.49 L1647.26,849.80 L1649.12,848.27 L1651.08,846.91 L1653.13,845.72 L1655.27,844.71 L1657.51,843.88 L1659.85,843.24 L1662.31,842.77 L1664.95,842.49 L1668.05,842.40 L1671.15,842.49 L1673.79,842.77 L1676.25,843.24 L1678.59,843.88 L1680.83,844.71 L1682.97,845.72 L1685.02,846.91 L1686.98,848.27 L1688.84,849.80 L1690.60,851.49 L1692.25,853.35 L1693.81,855.36 L1695.25,857.53 L1696.58,859.84 L1697.80,862.30 L1698.89,864.89 L1699.87,867.62 L1700.72,870.48 L1701.44,873.47 L1702.04,876.59 L1702.50,879.86 L1702.83,883.30 L1703.03,886.97 Z M1688.00,891.15 L1687.96,888.02 L1687.85,885.36 L1687.66,882.88 L1687.40,880.52 L1687.06,878.26 L1686.65,876.10 L1686.16,874.03 L1685.61,872.06 L1684.99,870.19 L1684.30,868.41 L1683.54,866.74 L1682.72,865.17 L1681.84,863.72 L1680.90,862.37 L1679.90,861.15 L1678.85,860.04 L1677.74,859.06 L1676.57,858.20 L1675.36,857.47 L1674.09,856.87 L1672.76,856.40 L1671.36,856.07 L1669.86,855.87 L1668.10,855.80 L1666.34,855.87 L1664.84,856.07 L1663.44,856.40 L1662.11,856.87 L1660.84,857.47 L1659.63,858.20 L1658.46,859.06 L1657.35,860.04 L1656.30,861.15 L1655.30,862.37 L1654.36,863.72 L1653.48,865.17 L1652.66,866.74 L1651.90,868.41 L1651.21,870.19 L1650.59,872.06 L1650.04,874.03 L1649.55,876.10 L1649.14,878.26 L1648.80,880.52 L1648.54,882.88 L1648.35,885.36 L1648.24,888.02 L1648.20,891.15 L1648.24,894.28 L1648.35,896.94 L1648.54,899.42 L1648.80,901.78 L1649.14,904.04 L1649.55,906.20 L1650.04,908.27 L1650.59,910.24 L1651.21,912.11 L1651.90,913.89 L1652.66,915.56 L1653.48,917.13 L1654.36,918.58 L1655.30,919.93 L1656.30,921.15 L1657.35,922.26 L1658.46,923.24 L1659.63,924.10 L1660.84,924.83 L1662.11,925.43 L1663.44,925.90 L1664.84,926.23 L1666.34,926.43 L1668.10,926.50 L1669.86,926.43 L1671.36,926.23 L1672.76,925.90 L1674.09,925.43 L1675.36,924.83 L1676.57,924.10 L1677.74,923.24 L1678.85,922.26 L1679.90,921.15 L1680.90,919.93 L1681.84,918.58 L1682.72,917.13 L1683.54,915.56 L1684.30,913.89 L1684.99,912.11 L1685.61,910.24 L1686.16,908.27 L1686.65,906.20 L1687.06,904.04 L1687.40,901.78 L1687.66,899.42 L1687.85,896.94 L1687.96,894.28 Z"/></svg><svg class="r" style="left:0;top:0;overflow:visible" width="1" height="1"><path fill-rule="evenodd" fill="#86bd72" d="M1787.20,891.30 L1787.13,895.63 L1786.93,899.30 L1786.60,902.74 L1786.14,906.01 L1785.54,909.13 L1784.82,912.12 L1783.97,914.98 L1782.99,917.71 L1781.90,920.30 L1780.68,922.76 L1779.35,925.07 L1777.91,927.24 L1776.35,929.25 L1774.70,931.11 L1772.94,932.80 L1771.08,934.33 L1769.12,935.69 L1767.07,936.88 L1764.93,937.89 L1762.69,938.72 L1760.35,939.36 L1757.89,939.83 L1755.25,940.11 L1752.15,940.20 L1749.05,940.11 L1746.41,939.83 L1743.95,939.36 L1741.61,938.72 L1739.37,937.89 L1737.23,936.88 L1735.18,935.69 L1733.22,934.33 L1731.36,932.80 L1729.60,931.11 L1727.95,929.25 L1726.39,927.24 L1724.95,925.07 L1723.62,922.76 L1722.40,920.30 L1721.31,917.71 L1720.33,914.98 L1719.48,912.12 L1718.76,909.13 L1718.16,906.01 L1717.70,902.74 L1717.37,899.30 L1717.17,895.63 L1717.10,891.30 L1717.17,886.97 L1717.37,883.30 L1717.70,879.86 L1718.16,876.59 L1718.76,873.47 L1719.48,870.48 L1720.33,867.62 L1721.31,864.89 L1722.40,862.30 L1723.62,859.84 L1724.95,857.53 L1726.39,855.36 L1727.95,853.35 L1729.60,851.49 L1731.36,849.80 L1733.22,848.27 L1735.18,846.91 L1737.23,845.72 L1739.37,844.71 L1741.61,843.88 L1743.95,843.24 L1746.41,842.77 L1749.05,842.49 L1752.15,842.40 L1755.25,842.49 L1757.89,842.77 L1760.35,843.24 L1762.69,843.88 L1764.93,844.71 L1767.07,845.72 L1769.12,846.91 L1771.08,848.27 L1772.94,849.80 L1774.70,851.49 L1776.35,853.35 L1777.91,855.36 L1779.35,857.53 L1780.68,859.84 L1781.90,862.30 L1782.99,864.89 L1783.97,867.62 L1784.82,870.48 L1785.54,873.47 L1786.14,876.59 L1786.60,879.86 L1786.93,883.30 L1787.13,886.97 Z M1772.10,891.15 L1772.06,888.02 L1771.95,885.36 L1771.76,882.88 L1771.50,880.52 L1771.16,878.26 L1770.75,876.10 L1770.26,874.03 L1769.71,872.06 L1769.09,870.19 L1768.40,868.41 L1767.64,866.74 L1766.82,865.17 L1765.94,863.72 L1765.00,862.37 L1764.00,861.15 L1762.95,860.04 L1761.84,859.06 L1760.67,858.20 L1759.46,857.47 L1758.19,856.87 L1756.86,856.40 L1755.46,856.07 L1753.96,855.87 L1752.20,855.80 L1750.44,855.87 L1748.94,856.07 L1747.54,856.40 L1746.21,856.87 L1744.94,857.47 L1743.73,858.20 L1742.56,859.06 L1741.45,860.04 L1740.40,861.15 L1739.40,862.37 L1738.46,863.72 L1737.58,865.17 L1736.76,866.74 L1736.00,868.41 L1735.31,870.19 L1734.69,872.06 L1734.14,874.03 L1733.65,876.10 L1733.24,878.26 L1732.90,880.52 L1732.64,882.88 L1732.45,885.36 L1732.34,888.02 L1732.30,891.15 L1732.34,894.28 L1732.45,896.94 L1732.64,899.42 L1732.90,901.78 L1733.24,904.04 L1733.65,906.20 L1734.14,908.27 L1734.69,910.24 L1735.31,912.11 L1736.00,913.89 L1736.76,915.56 L1737.58,917.13 L1738.46,918.58 L1739.40,919.93 L1740.40,921.15 L1741.45,922.26 L1742.56,923.24 L1743.73,924.10 L1744.94,924.83 L1746.21,925.43 L1747.54,925.90 L1748.94,926.23 L1750.44,926.43 L1752.20,926.50 L1753.96,926.43 L1755.46,926.23 L1756.86,925.90 L1758.19,925.43 L1759.46,924.83 L1760.67,924.10 L1761.84,923.24 L1762.95,922.26 L1764.00,921.15 L1765.00,919.93 L1765.94,918.58 L1766.82,917.13 L1767.64,915.56 L1768.40,913.89 L1769.09,912.11 L1769.71,910.24 L1770.26,908.27 L1770.75,906.20 L1771.16,904.04 L1771.50,901.78 L1771.76,899.42 L1771.95,896.94 L1772.06,894.28 Z"/></svg><svg class="r" style="left:0;top:0;overflow:visible" width="1" height="1"><path fill-rule="evenodd" fill="#86bd72" d="M1846.90,864.85 L1846.86,866.54 L1846.74,868.12 L1846.54,869.65 L1846.27,871.13 L1845.91,872.57 L1845.48,873.96 L1844.97,875.31 L1844.40,876.61 L1843.75,877.85 L1843.03,879.03 L1842.25,880.15 L1841.40,881.20 L1840.50,882.19 L1839.54,883.10 L1838.52,883.93 L1837.45,884.69 L1836.34,885.36 L1835.18,885.95 L1833.98,886.45 L1832.75,886.86 L1831.47,887.18 L1830.16,887.41 L1828.81,887.55 L1827.35,887.60 L1825.89,887.55 L1824.54,887.41 L1823.23,887.18 L1821.95,886.86 L1820.72,886.45 L1819.52,885.95 L1818.36,885.36 L1817.25,884.69 L1816.18,883.93 L1815.16,883.10 L1814.20,882.19 L1813.30,881.20 L1812.45,880.15 L1811.67,879.03 L1810.95,877.85 L1810.30,876.61 L1809.73,875.31 L1809.22,873.96 L1808.79,872.57 L1808.43,871.13 L1808.16,869.65 L1807.96,868.12 L1807.84,866.54 L1807.80,864.85 L1807.84,863.16 L1807.96,861.58 L1808.16,860.05 L1808.43,858.57 L1808.79,857.13 L1809.22,855.74 L1809.73,854.39 L1810.30,853.09 L1810.95,851.85 L1811.67,850.67 L1812.45,849.55 L1813.30,848.50 L1814.20,847.51 L1815.16,846.60 L1816.18,845.77 L1817.25,845.01 L1818.36,844.34 L1819.52,843.75 L1820.72,843.25 L1821.95,842.84 L1823.23,842.52 L1824.54,842.29 L1825.89,842.15 L1827.35,842.10 L1828.81,842.15 L1830.16,842.29 L1831.47,842.52 L1832.75,842.84 L1833.98,843.25 L1835.18,843.75 L1836.34,844.34 L1837.45,845.01 L1838.52,845.77 L1839.54,846.60 L1840.50,847.51 L1841.40,848.50 L1842.25,849.55 L1843.03,850.67 L1843.75,851.85 L1844.40,853.09 L1844.97,854.39 L1845.48,855.74 L1845.91,857.13 L1846.27,858.57 L1846.54,860.05 L1846.74,861.58 L1846.86,863.16 Z M1835.60,864.50 L1835.58,863.58 L1835.53,862.73 L1835.44,861.91 L1835.32,861.10 L1835.17,860.33 L1834.98,859.57 L1834.76,858.84 L1834.51,858.14 L1834.22,857.47 L1833.91,856.83 L1833.57,856.23 L1833.20,855.66 L1832.80,855.13 L1832.38,854.63 L1831.93,854.18 L1831.47,853.77 L1830.98,853.41 L1830.48,853.09 L1829.95,852.82 L1829.41,852.60 L1828.85,852.43 L1828.28,852.30 L1827.69,852.23 L1827.05,852.20 L1826.41,852.23 L1825.82,852.30 L1825.25,852.43 L1824.69,852.60 L1824.15,852.82 L1823.62,853.09 L1823.12,853.41 L1822.63,853.77 L1822.17,854.18 L1821.72,854.63 L1821.30,855.13 L1820.90,855.66 L1820.53,856.23 L1820.19,856.83 L1819.88,857.47 L1819.59,858.14 L1819.34,858.84 L1819.12,859.57 L1818.93,860.33 L1818.78,861.10 L1818.66,861.91 L1818.57,862.73 L1818.52,863.58 L1818.50,864.50 L1818.52,865.42 L1818.57,866.27 L1818.66,867.09 L1818.78,867.90 L1818.93,868.67 L1819.12,869.43 L1819.34,870.16 L1819.59,870.86 L1819.88,871.53 L1820.19,872.17 L1820.53,872.77 L1820.90,873.34 L1821.30,873.87 L1821.72,874.37 L1822.17,874.82 L1822.63,875.23 L1823.12,875.59 L1823.62,875.91 L1824.15,876.18 L1824.69,876.40 L1825.25,876.57 L1825.82,876.70 L1826.41,876.77 L1827.05,876.80 L1827.69,876.77 L1828.28,876.70 L1828.85,876.57 L1829.41,876.40 L1829.95,876.18 L1830.48,875.91 L1830.98,875.59 L1831.47,875.23 L1831.93,874.82 L1832.38,874.37 L1832.80,873.87 L1833.20,873.34 L1833.57,872.77 L1833.91,872.17 L1834.22,871.53 L1834.51,870.86 L1834.76,870.16 L1834.98,869.43 L1835.17,868.67 L1835.32,867.90 L1835.44,867.09 L1835.53,866.27 L1835.58,865.42 Z M1910.30,918.50 L1910.26,920.18 L1910.14,921.74 L1909.94,923.24 L1909.65,924.71 L1909.29,926.13 L1908.85,927.51 L1908.34,928.85 L1907.75,930.13 L1907.09,931.36 L1906.36,932.52 L1905.57,933.63 L1904.71,934.67 L1903.78,935.65 L1902.80,936.55 L1901.77,937.37 L1900.68,938.12 L1899.55,938.78 L1898.37,939.37 L1897.15,939.86 L1895.89,940.27 L1894.60,940.59 L1893.26,940.82 L1891.88,940.95 L1890.40,941.00 L1888.92,940.95 L1887.54,940.82 L1886.20,940.59 L1884.91,940.27 L1883.65,939.86 L1882.43,939.37 L1881.25,938.78 L1880.12,938.12 L1879.03,937.37 L1878.00,936.55 L1877.02,935.65 L1876.09,934.67 L1875.23,933.63 L1874.44,932.52 L1873.71,931.36 L1873.05,930.13 L1872.46,928.85 L1871.95,927.51 L1871.51,926.13 L1871.15,924.71 L1870.86,923.24 L1870.66,921.74 L1870.54,920.18 L1870.50,918.50 L1870.54,916.82 L1870.66,915.26 L1870.86,913.76 L1871.15,912.29 L1871.51,910.87 L1871.95,909.49 L1872.46,908.15 L1873.05,906.87 L1873.71,905.64 L1874.44,904.48 L1875.23,903.37 L1876.09,902.33 L1877.02,901.35 L1878.00,900.45 L1879.03,899.63 L1880.12,898.88 L1881.25,898.22 L1882.43,897.63 L1883.65,897.14 L1884.91,896.73 L1886.20,896.41 L1887.54,896.18 L1888.92,896.05 L1890.40,896.00 L1891.88,896.05 L1893.26,896.18 L1894.60,896.41 L1895.89,896.73 L1897.15,897.14 L1898.37,897.63 L1899.55,898.22 L1900.68,898.88 L1901.77,899.63 L1902.80,900.45 L1903.78,901.35 L1904.71,902.33 L1905.57,903.37 L1906.36,904.48 L1907.09,905.64 L1907.75,906.87 L1908.34,908.15 L1908.85,909.49 L1909.29,910.87 L1909.65,912.29 L1909.94,913.76 L1910.14,915.26 L1910.26,916.82 Z M1898.10,918.10 L1898.08,917.19 L1898.04,916.35 L1897.96,915.53 L1897.84,914.73 L1897.70,913.96 L1897.53,913.21 L1897.32,912.49 L1897.09,911.80 L1896.83,911.13 L1896.54,910.50 L1896.22,909.89 L1895.88,909.33 L1895.51,908.80 L1895.12,908.31 L1894.71,907.87 L1894.28,907.46 L1893.83,907.10 L1893.36,906.79 L1892.88,906.52 L1892.38,906.30 L1891.87,906.12 L1891.34,906.00 L1890.79,905.92 L1890.20,905.90 L1889.61,905.92 L1889.06,906.00 L1888.53,906.12 L1888.02,906.30 L1887.52,906.52 L1887.04,906.79 L1886.57,907.10 L1886.12,907.46 L1885.69,907.87 L1885.28,908.31 L1884.89,908.80 L1884.52,909.33 L1884.18,909.89 L1883.86,910.50 L1883.57,911.13 L1883.31,911.80 L1883.08,912.49 L1882.87,913.21 L1882.70,913.96 L1882.56,914.73 L1882.44,915.53 L1882.36,916.35 L1882.32,917.19 L1882.30,918.10 L1882.32,919.01 L1882.36,919.85 L1882.44,920.67 L1882.56,921.47 L1882.70,922.24 L1882.87,922.99 L1883.08,923.71 L1883.31,924.40 L1883.57,925.07 L1883.86,925.70 L1884.18,926.31 L1884.52,926.87 L1884.89,927.40 L1885.28,927.89 L1885.69,928.33 L1886.12,928.74 L1886.57,929.10 L1887.04,929.41 L1887.52,929.68 L1888.02,929.90 L1888.53,930.08 L1889.06,930.20 L1889.61,930.28 L1890.20,930.30 L1890.79,930.28 L1891.34,930.20 L1891.87,930.08 L1892.38,929.90 L1892.88,929.68 L1893.36,929.41 L1893.83,929.10 L1894.28,928.74 L1894.71,928.33 L1895.12,927.89 L1895.51,927.40 L1895.88,926.87 L1896.22,926.31 L1896.54,925.70 L1896.83,925.07 L1897.09,924.40 L1897.32,923.71 L1897.53,922.99 L1897.70,922.24 L1897.84,921.47 L1897.96,920.67 L1898.04,919.85 L1898.08,919.01 Z M1883.80,843.60 L1897.00,843.60 L1832.90,939.20 L1819.90,939.20 Z"/></svg><svg class="r" style="left:0;top:0" width="3360" height="1858"><path d="M1454.66,1633.73 A309.80,309.80 0 0 1 1957.08,1308.21 L1947.49,1318.82 A295.50,295.50 0 0 0 1468.26,1629.31 Z" fill="#e0555f"/><path d="M1957.08,1308.21 A309.80,309.80 0 0 1 2049.66,1462.09 L2035.79,1465.59 A295.50,295.50 0 0 0 1947.49,1318.82 Z" fill="#f29e4c"/><path d="M2049.66,1462.09 A309.80,309.80 0 0 1 2043.94,1633.73 L2030.34,1629.31 A295.50,295.50 0 0 0 2035.79,1465.59 Z" fill="#86bd72"/><path d="M1471.78,1628.17 A291.80,291.80 0 1 1 2026.82,1628.17 L1952.16,1603.91 A213.30,213.30 0 1 0 1546.44,1603.91 Z" fill="#86bd72"/></svg><svg class="r" style="left:0;top:0;overflow:visible" width="1" height="1"><path fill-rule="evenodd" fill="#86bd72" d="M1598.25,1527.60 L1615.94,1527.60 L1615.94,1623.20 L1600.93,1623.20 L1600.93,1541.27 L1577.70,1557.52 L1577.70,1542.13 Z"/></svg><svg class="r" style="left:0;top:0;overflow:visible" width="1" height="1"><path fill-rule="evenodd" fill="#86bd72" d="M1703.10,1575.30 L1703.03,1579.63 L1702.83,1583.30 L1702.50,1586.74 L1702.04,1590.01 L1701.44,1593.13 L1700.72,1596.12 L1699.87,1598.98 L1698.89,1601.71 L1697.80,1604.30 L1696.58,1606.76 L1695.25,1609.07 L1693.81,1611.24 L1692.25,1613.25 L1690.60,1615.11 L1688.84,1616.80 L1686.98,1618.33 L1685.02,1619.69 L1682.97,1620.88 L1680.83,1621.89 L1678.59,1622.72 L1676.25,1623.36 L1673.79,1623.83 L1671.15,1624.11 L1668.05,1624.20 L1664.95,1624.11 L1662.31,1623.83 L1659.85,1623.36 L1657.51,1622.72 L1655.27,1621.89 L1653.13,1620.88 L1651.08,1619.69 L1649.12,1618.33 L1647.26,1616.80 L1645.50,1615.11 L1643.85,1613.25 L1642.29,1611.24 L1640.85,1609.07 L1639.52,1606.76 L1638.30,1604.30 L1637.21,1601.71 L1636.23,1598.98 L1635.38,1596.12 L1634.66,1593.13 L1634.06,1590.01 L1633.60,1586.74 L1633.27,1583.30 L1633.07,1579.63 L1633.00,1575.30 L1633.07,1570.97 L1633.27,1567.30 L1633.60,1563.86 L1634.06,1560.59 L1634.66,1557.47 L1635.38,1554.48 L1636.23,1551.62 L1637.21,1548.89 L1638.30,1546.30 L1639.52,1543.84 L1640.85,1541.53 L1642.29,1539.36 L1643.85,1537.35 L1645.50,1535.49 L1647.26,1533.80 L1649.12,1532.27 L1651.08,1530.91 L1653.13,1529.72 L1655.27,1528.71 L1657.51,1527.88 L1659.85,1527.24 L1662.31,1526.77 L1664.95,1526.49 L1668.05,1526.40 L1671.15,1526.49 L1673.79,1526.77 L1676.25,1527.24 L1678.59,1527.88 L1680.83,1528.71 L1682.97,1529.72 L1685.02,1530.91 L1686.98,1532.27 L1688.84,1533.80 L1690.60,1535.49 L1692.25,1537.35 L1693.81,1539.36 L1695.25,1541.53 L1696.58,1543.84 L1697.80,1546.30 L1698.89,1548.89 L1699.87,1551.62 L1700.72,1554.48 L1701.44,1557.47 L1702.04,1560.59 L1702.50,1563.86 L1702.83,1567.30 L1703.03,1570.97 Z M1688.00,1575.15 L1687.96,1572.02 L1687.85,1569.36 L1687.66,1566.88 L1687.40,1564.52 L1687.06,1562.26 L1686.65,1560.10 L1686.16,1558.03 L1685.61,1556.06 L1684.99,1554.19 L1684.30,1552.41 L1683.54,1550.74 L1682.72,1549.17 L1681.84,1547.72 L1680.90,1546.37 L1679.90,1545.15 L1678.85,1544.04 L1677.74,1543.06 L1676.57,1542.20 L1675.36,1541.47 L1674.09,1540.87 L1672.76,1540.40 L1671.36,1540.07 L1669.86,1539.87 L1668.10,1539.80 L1666.34,1539.87 L1664.84,1540.07 L1663.44,1540.40 L1662.11,1540.87 L1660.84,1541.47 L1659.63,1542.20 L1658.46,1543.06 L1657.35,1544.04 L1656.30,1545.15 L1655.30,1546.37 L1654.36,1547.72 L1653.48,1549.17 L1652.66,1550.74 L1651.90,1552.41 L1651.21,1554.19 L1650.59,1556.06 L1650.04,1558.03 L1649.55,1560.10 L1649.14,1562.26 L1648.80,1564.52 L1648.54,1566.88 L1648.35,1569.36 L1648.24,1572.02 L1648.20,1575.15 L1648.24,1578.28 L1648.35,1580.94 L1648.54,1583.42 L1648.80,1585.78 L1649.14,1588.04 L1649.55,1590.20 L1650.04,1592.27 L1650.59,1594.24 L1651.21,1596.11 L1651.90,1597.89 L1652.66,1599.56 L1653.48,1601.13 L1654.36,1602.58 L1655.30,1603.93 L1656.30,1605.15 L1657.35,1606.26 L1658.46,1607.24 L1659.63,1608.10 L1660.84,1608.83 L1662.11,1609.43 L1663.44,1609.90 L1664.84,1610.23 L1666.34,1610.43 L1668.10,1610.50 L1669.86,1610.43 L1671.36,1610.23 L1672.76,1609.90 L1674.09,1609.43 L1675.36,1608.83 L1676.57,1608.10 L1677.74,1607.24 L1678.85,1606.26 L1679.90,1605.15 L1680.90,1603.93 L1681.84,1602.58 L1682.72,1601.13 L1683.54,1599.56 L1684.30,1597.89 L1684.99,1596.11 L1685.61,1594.24 L1686.16,1592.27 L1686.65,1590.20 L1687.06,1588.04 L1687.40,1585.78 L1687.66,1583.42 L1687.85,1580.94 L1687.96,1578.28 Z"/></svg><svg class="r" style="left:0;top:0;overflow:visible" width="1" height="1"><path fill-rule="evenodd" fill="#86bd72" d="M1787.20,1575.30 L1787.13,1579.63 L1786.93,1583.30 L1786.60,1586.74 L1786.14,1590.01 L1785.54,1593.13 L1784.82,1596.12 L1783.97,1598.98 L1782.99,1601.71 L1781.90,1604.30 L1780.68,1606.76 L1779.35,1609.07 L1777.91,1611.24 L1776.35,1613.25 L1774.70,1615.11 L1772.94,1616.80 L1771.08,1618.33 L1769.12,1619.69 L1767.07,1620.88 L1764.93,1621.89 L1762.69,1622.72 L1760.35,1623.36 L1757.89,1623.83 L1755.25,1624.11 L1752.15,1624.20 L1749.05,1624.11 L1746.41,1623.83 L1743.95,1623.36 L1741.61,1622.72 L1739.37,1621.89 L1737.23,1620.88 L1735.18,1619.69 L1733.22,1618.33 L1731.36,1616.80 L1729.60,1615.11 L1727.95,1613.25 L1726.39,1611.24 L1724.95,1609.07 L1723.62,1606.76 L1722.40,1604.30 L1721.31,1601.71 L1720.33,1598.98 L1719.48,1596.12 L1718.76,1593.13 L1718.16,1590.01 L1717.70,1586.74 L1717.37,1583.30 L1717.17,1579.63 L1717.10,1575.30 L1717.17,1570.97 L1717.37,1567.30 L1717.70,1563.86 L1718.16,1560.59 L1718.76,1557.47 L1719.48,1554.48 L1720.33,1551.62 L1721.31,1548.89 L1722.40,1546.30 L1723.62,1543.84 L1724.95,1541.53 L1726.39,1539.36 L1727.95,1537.35 L1729.60,1535.49 L1731.36,1533.80 L1733.22,1532.27 L1735.18,1530.91 L1737.23,1529.72 L1739.37,1528.71 L1741.61,1527.88 L1743.95,1527.24 L1746.41,1526.77 L1749.05,1526.49 L1752.15,1526.40 L1755.25,1526.49 L1757.89,1526.77 L1760.35,1527.24 L1762.69,1527.88 L1764.93,1528.71 L1767.07,1529.72 L1769.12,1530.91 L1771.08,1532.27 L1772.94,1533.80 L1774.70,1535.49 L1776.35,1537.35 L1777.91,1539.36 L1779.35,1541.53 L1780.68,1543.84 L1781.90,1546.30 L1782.99,1548.89 L1783.97,1551.62 L1784.82,1554.48 L1785.54,1557.47 L1786.14,1560.59 L1786.60,1563.86 L1786.93,1567.30 L1787.13,1570.97 Z M1772.10,1575.15 L1772.06,1572.02 L1771.95,1569.36 L1771.76,1566.88 L1771.50,1564.52 L1771.16,1562.26 L1770.75,1560.10 L1770.26,1558.03 L1769.71,1556.06 L1769.09,1554.19 L1768.40,1552.41 L1767.64,1550.74 L1766.82,1549.17 L1765.94,1547.72 L1765.00,1546.37 L1764.00,1545.15 L1762.95,1544.04 L1761.84,1543.06 L1760.67,1542.20 L1759.46,1541.47 L1758.19,1540.87 L1756.86,1540.40 L1755.46,1540.07 L1753.96,1539.87 L1752.20,1539.80 L1750.44,1539.87 L1748.94,1540.07 L1747.54,1540.40 L1746.21,1540.87 L1744.94,1541.47 L1743.73,1542.20 L1742.56,1543.06 L1741.45,1544.04 L1740.40,1545.15 L1739.40,1546.37 L1738.46,1547.72 L1737.58,1549.17 L1736.76,1550.74 L1736.00,1552.41 L1735.31,1554.19 L1734.69,1556.06 L1734.14,1558.03 L1733.65,1560.10 L1733.24,1562.26 L1732.90,1564.52 L1732.64,1566.88 L1732.45,1569.36 L1732.34,1572.02 L1732.30,1575.15 L1732.34,1578.28 L1732.45,1580.94 L1732.64,1583.42 L1732.90,1585.78 L1733.24,1588.04 L1733.65,1590.20 L1734.14,1592.27 L1734.69,1594.24 L1735.31,1596.11 L1736.00,1597.89 L1736.76,1599.56 L1737.58,1601.13 L1738.46,1602.58 L1739.40,1603.93 L1740.40,1605.15 L1741.45,1606.26 L1742.56,1607.24 L1743.73,1608.10 L1744.94,1608.83 L1746.21,1609.43 L1747.54,1609.90 L1748.94,1610.23 L1750.44,1610.43 L1752.20,1610.50 L1753.96,1610.43 L1755.46,1610.23 L1756.86,1609.90 L1758.19,1609.43 L1759.46,1608.83 L1760.67,1608.10 L1761.84,1607.24 L1762.95,1606.26 L1764.00,1605.15 L1765.00,1603.93 L1765.94,1602.58 L1766.82,1601.13 L1767.64,1599.56 L1768.40,1597.89 L1769.09,1596.11 L1769.71,1594.24 L1770.26,1592.27 L1770.75,1590.20 L1771.16,1588.04 L1771.50,1585.78 L1771.76,1583.42 L1771.95,1580.94 L1772.06,1578.28 Z"/></svg><svg class="r" style="left:0;top:0;overflow:visible" width="1" height="1"><path fill-rule="evenodd" fill="#86bd72" d="M1846.90,1548.85 L1846.86,1550.54 L1846.74,1552.12 L1846.54,1553.65 L1846.27,1555.13 L1845.91,1556.57 L1845.48,1557.96 L1844.97,1559.31 L1844.40,1560.61 L1843.75,1561.85 L1843.03,1563.03 L1842.25,1564.15 L1841.40,1565.20 L1840.50,1566.19 L1839.54,1567.10 L1838.52,1567.93 L1837.45,1568.69 L1836.34,1569.36 L1835.18,1569.95 L1833.98,1570.45 L1832.75,1570.86 L1831.47,1571.18 L1830.16,1571.41 L1828.81,1571.55 L1827.35,1571.60 L1825.89,1571.55 L1824.54,1571.41 L1823.23,1571.18 L1821.95,1570.86 L1820.72,1570.45 L1819.52,1569.95 L1818.36,1569.36 L1817.25,1568.69 L1816.18,1567.93 L1815.16,1567.10 L1814.20,1566.19 L1813.30,1565.20 L1812.45,1564.15 L1811.67,1563.03 L1810.95,1561.85 L1810.30,1560.61 L1809.73,1559.31 L1809.22,1557.96 L1808.79,1556.57 L1808.43,1555.13 L1808.16,1553.65 L1807.96,1552.12 L1807.84,1550.54 L1807.80,1548.85 L1807.84,1547.16 L1807.96,1545.58 L1808.16,1544.05 L1808.43,1542.57 L1808.79,1541.13 L1809.22,1539.74 L1809.73,1538.39 L1810.30,1537.09 L1810.95,1535.85 L1811.67,1534.67 L1812.45,1533.55 L1813.30,1532.50 L1814.20,1531.51 L1815.16,1530.60 L1816.18,1529.77 L1817.25,1529.01 L1818.36,1528.34 L1819.52,1527.75 L1820.72,1527.25 L1821.95,1526.84 L1823.23,1526.52 L1824.54,1526.29 L1825.89,1526.15 L1827.35,1526.10 L1828.81,1526.15 L1830.16,1526.29 L1831.47,1526.52 L1832.75,1526.84 L1833.98,1527.25 L1835.18,1527.75 L1836.34,1528.34 L1837.45,1529.01 L1838.52,1529.77 L1839.54,1530.60 L1840.50,1531.51 L1841.40,1532.50 L1842.25,1533.55 L1843.03,1534.67 L1843.75,1535.85 L1844.40,1537.09 L1844.97,1538.39 L1845.48,1539.74 L1845.91,1541.13 L1846.27,1542.57 L1846.54,1544.05 L1846.74,1545.58 L1846.86,1547.16 Z M1835.60,1548.50 L1835.58,1547.58 L1835.53,1546.73 L1835.44,1545.91 L1835.32,1545.10 L1835.17,1544.33 L1834.98,1543.57 L1834.76,1542.84 L1834.51,1542.14 L1834.22,1541.47 L1833.91,1540.83 L1833.57,1540.23 L1833.20,1539.66 L1832.80,1539.13 L1832.38,1538.63 L1831.93,1538.18 L1831.47,1537.77 L1830.98,1537.41 L1830.48,1537.09 L1829.95,1536.82 L1829.41,1536.60 L1828.85,1536.43 L1828.28,1536.30 L1827.69,1536.23 L1827.05,1536.20 L1826.41,1536.23 L1825.82,1536.30 L1825.25,1536.43 L1824.69,1536.60 L1824.15,1536.82 L1823.62,1537.09 L1823.12,1537.41 L1822.63,1537.77 L1822.17,1538.18 L1821.72,1538.63 L1821.30,1539.13 L1820.90,1539.66 L1820.53,1540.23 L1820.19,1540.83 L1819.88,1541.47 L1819.59,1542.14 L1819.34,1542.84 L1819.12,1543.57 L1818.93,1544.33 L1818.78,1545.10 L1818.66,1545.91 L1818.57,1546.73 L1818.52,1547.58 L1818.50,1548.50 L1818.52,1549.42 L1818.57,1550.27 L1818.66,1551.09 L1818.78,1551.90 L1818.93,1552.67 L1819.12,1553.43 L1819.34,1554.16 L1819.59,1554.86 L1819.88,1555.53 L1820.19,1556.17 L1820.53,1556.77 L1820.90,1557.34 L1821.30,1557.87 L1821.72,1558.37 L1822.17,1558.82 L1822.63,1559.23 L1823.12,1559.59 L1823.62,1559.91 L1824.15,1560.18 L1824.69,1560.40 L1825.25,1560.57 L1825.82,1560.70 L1826.41,1560.77 L1827.05,1560.80 L1827.69,1560.77 L1828.28,1560.70 L1828.85,1560.57 L1829.41,1560.40 L1829.95,1560.18 L1830.48,1559.91 L1830.98,1559.59 L1831.47,1559.23 L1831.93,1558.82 L1832.38,1558.37 L1832.80,1557.87 L1833.20,1557.34 L1833.57,1556.77 L1833.91,1556.17 L1834.22,1555.53 L1834.51,1554.86 L1834.76,1554.16 L1834.98,1553.43 L1835.17,1552.67 L1835.32,1551.90 L1835.44,1551.09 L1835.53,1550.27 L1835.58,1549.42 Z M1910.30,1602.50 L1910.26,1604.18 L1910.14,1605.74 L1909.94,1607.24 L1909.65,1608.71 L1909.29,1610.13 L1908.85,1611.51 L1908.34,1612.85 L1907.75,1614.13 L1907.09,1615.36 L1906.36,1616.52 L1905.57,1617.63 L1904.71,1618.67 L1903.78,1619.65 L1902.80,1620.55 L1901.77,1621.37 L1900.68,1622.12 L1899.55,1622.78 L1898.37,1623.37 L1897.15,1623.86 L1895.89,1624.27 L1894.60,1624.59 L1893.26,1624.82 L1891.88,1624.95 L1890.40,1625.00 L1888.92,1624.95 L1887.54,1624.82 L1886.20,1624.59 L1884.91,1624.27 L1883.65,1623.86 L1882.43,1623.37 L1881.25,1622.78 L1880.12,1622.12 L1879.03,1621.37 L1878.00,1620.55 L1877.02,1619.65 L1876.09,1618.67 L1875.23,1617.63 L1874.44,1616.52 L1873.71,1615.36 L1873.05,1614.13 L1872.46,1612.85 L1871.95,1611.51 L1871.51,1610.13 L1871.15,1608.71 L1870.86,1607.24 L1870.66,1605.74 L1870.54,1604.18 L1870.50,1602.50 L1870.54,1600.82 L1870.66,1599.26 L1870.86,1597.76 L1871.15,1596.29 L1871.51,1594.87 L1871.95,1593.49 L1872.46,1592.15 L1873.05,1590.87 L1873.71,1589.64 L1874.44,1588.48 L1875.23,1587.37 L1876.09,1586.33 L1877.02,1585.35 L1878.00,1584.45 L1879.03,1583.63 L1880.12,1582.88 L1881.25,1582.22 L1882.43,1581.63 L1883.65,1581.14 L1884.91,1580.73 L1886.20,1580.41 L1887.54,1580.18 L1888.92,1580.05 L1890.40,1580.00 L1891.88,1580.05 L1893.26,1580.18 L1894.60,1580.41 L1895.89,1580.73 L1897.15,1581.14 L1898.37,1581.63 L1899.55,1582.22 L1900.68,1582.88 L1901.77,1583.63 L1902.80,1584.45 L1903.78,1585.35 L1904.71,1586.33 L1905.57,1587.37 L1906.36,1588.48 L1907.09,1589.64 L1907.75,1590.87 L1908.34,1592.15 L1908.85,1593.49 L1909.29,1594.87 L1909.65,1596.29 L1909.94,1597.76 L1910.14,1599.26 L1910.26,1600.82 Z M1898.10,1602.10 L1898.08,1601.19 L1898.04,1600.35 L1897.96,1599.53 L1897.84,1598.73 L1897.70,1597.96 L1897.53,1597.21 L1897.32,1596.49 L1897.09,1595.80 L1896.83,1595.13 L1896.54,1594.50 L1896.22,1593.89 L1895.88,1593.33 L1895.51,1592.80 L1895.12,1592.31 L1894.71,1591.87 L1894.28,1591.46 L1893.83,1591.10 L1893.36,1590.79 L1892.88,1590.52 L1892.38,1590.30 L1891.87,1590.12 L1891.34,1590.00 L1890.79,1589.92 L1890.20,1589.90 L1889.61,1589.92 L1889.06,1590.00 L1888.53,1590.12 L1888.02,1590.30 L1887.52,1590.52 L1887.04,1590.79 L1886.57,1591.10 L1886.12,1591.46 L1885.69,1591.87 L1885.28,1592.31 L1884.89,1592.80 L1884.52,1593.33 L1884.18,1593.89 L1883.86,1594.50 L1883.57,1595.13 L1883.31,1595.80 L1883.08,1596.49 L1882.87,1597.21 L1882.70,1597.96 L1882.56,1598.73 L1882.44,1599.53 L1882.36,1600.35 L1882.32,1601.19 L1882.30,1602.10 L1882.32,1603.01 L1882.36,1603.85 L1882.44,1604.67 L1882.56,1605.47 L1882.70,1606.24 L1882.87,1606.99 L1883.08,1607.71 L1883.31,1608.40 L1883.57,1609.07 L1883.86,1609.70 L1884.18,1610.31 L1884.52,1610.87 L1884.89,1611.40 L1885.28,1611.89 L1885.69,1612.33 L1886.12,1612.74 L1886.57,1613.10 L1887.04,1613.41 L1887.52,1613.68 L1888.02,1613.90 L1888.53,1614.08 L1889.06,1614.20 L1889.61,1614.28 L1890.20,1614.30 L1890.79,1614.28 L1891.34,1614.20 L1891.87,1614.08 L1892.38,1613.90 L1892.88,1613.68 L1893.36,1613.41 L1893.83,1613.10 L1894.28,1612.74 L1894.71,1612.33 L1895.12,1611.89 L1895.51,1611.40 L1895.88,1610.87 L1896.22,1610.31 L1896.54,1609.70 L1896.83,1609.07 L1897.09,1608.40 L1897.32,1607.71 L1897.53,1606.99 L1897.70,1606.24 L1897.84,1605.47 L1897.96,1604.67 L1898.04,1603.85 L1898.08,1603.01 Z M1883.80,1527.60 L1897.00,1527.60 L1832.90,1623.20 L1819.90,1623.20 Z"/></svg><svg class="r" style="left:0;top:0;overflow:visible" width="1" height="1"><path fill-rule="evenodd" fill="#86bd72" d="M2436.26,602.30 L2489.84,602.30 L2489.84,891.90 L2444.37,891.90 L2444.37,643.71 L2374.00,692.94 L2374.00,646.32 Z"/></svg><svg class="r" style="left:0;top:0;overflow:visible" width="1" height="1"><path fill-rule="evenodd" fill="#86bd72" d="M2903.74,558.00 L2917.54,558.00 L2917.54,632.60 L2905.83,632.60 L2905.83,568.67 L2887.70,581.35 L2887.70,569.34 Z M2967.14,558.00 L2980.94,558.00 L2980.94,632.60 L2969.23,632.60 L2969.23,568.67 L2951.10,581.35 L2951.10,569.34 Z"/></svg><svg class="r" style="left:0;top:0;overflow:visible" width="1" height="1"><circle cx="2940.8" cy="625.00" r="7.8" fill="#86bd72"/></svg><svg class="r" style="left:0;top:0;overflow:visible" width="1" height="1"><path fill-rule="evenodd" fill="#86bd72" d="M3049.20,595.30 L3049.15,598.66 L3048.99,601.50 L3048.73,604.17 L3048.37,606.70 L3047.91,609.12 L3047.34,611.44 L3046.68,613.65 L3045.92,615.77 L3045.07,617.78 L3044.12,619.68 L3043.09,621.47 L3041.96,623.15 L3040.75,624.71 L3039.46,626.15 L3038.09,627.47 L3036.64,628.65 L3035.12,629.71 L3033.52,630.62 L3031.85,631.41 L3030.11,632.05 L3028.29,632.55 L3026.37,632.91 L3024.32,633.13 L3021.90,633.20 L3019.48,633.13 L3017.43,632.91 L3015.51,632.55 L3013.69,632.05 L3011.95,631.41 L3010.28,630.62 L3008.68,629.71 L3007.16,628.65 L3005.71,627.47 L3004.34,626.15 L3003.05,624.71 L3001.84,623.15 L3000.71,621.47 L2999.68,619.68 L2998.73,617.78 L2997.88,615.77 L2997.12,613.65 L2996.46,611.44 L2995.89,609.12 L2995.43,606.70 L2995.07,604.17 L2994.81,601.50 L2994.65,598.66 L2994.60,595.30 L2994.65,591.94 L2994.81,589.10 L2995.07,586.43 L2995.43,583.90 L2995.89,581.48 L2996.46,579.16 L2997.12,576.95 L2997.88,574.83 L2998.73,572.82 L2999.68,570.92 L3000.71,569.13 L3001.84,567.45 L3003.05,565.89 L3004.34,564.45 L3005.71,563.13 L3007.16,561.95 L3008.68,560.89 L3010.28,559.98 L3011.95,559.19 L3013.69,558.55 L3015.51,558.05 L3017.43,557.69 L3019.48,557.47 L3021.90,557.40 L3024.32,557.47 L3026.37,557.69 L3028.29,558.05 L3030.11,558.55 L3031.85,559.19 L3033.52,559.98 L3035.12,560.89 L3036.64,561.95 L3038.09,563.13 L3039.46,564.45 L3040.75,565.89 L3041.96,567.45 L3043.09,569.13 L3044.12,570.92 L3045.07,572.82 L3045.92,574.83 L3046.68,576.95 L3047.34,579.16 L3047.91,581.48 L3048.37,583.90 L3048.73,586.43 L3048.99,589.10 L3049.15,591.94 Z M3038.20,595.30 L3038.17,592.85 L3038.08,590.77 L3037.92,588.82 L3037.71,586.97 L3037.43,585.20 L3037.09,583.51 L3036.70,581.89 L3036.24,580.34 L3035.73,578.87 L3035.17,577.48 L3034.55,576.17 L3033.88,574.94 L3033.16,573.80 L3032.39,572.75 L3031.57,571.79 L3030.70,570.92 L3029.79,570.15 L3028.84,569.48 L3027.84,568.91 L3026.80,568.44 L3025.71,568.07 L3024.57,567.81 L3023.34,567.65 L3021.90,567.60 L3020.46,567.65 L3019.23,567.81 L3018.09,568.07 L3017.00,568.44 L3015.96,568.91 L3014.96,569.48 L3014.01,570.15 L3013.10,570.92 L3012.23,571.79 L3011.41,572.75 L3010.64,573.80 L3009.92,574.94 L3009.25,576.17 L3008.63,577.48 L3008.07,578.87 L3007.56,580.34 L3007.10,581.89 L3006.71,583.51 L3006.37,585.20 L3006.09,586.97 L3005.88,588.82 L3005.72,590.77 L3005.63,592.85 L3005.60,595.30 L3005.63,597.75 L3005.72,599.83 L3005.88,601.78 L3006.09,603.63 L3006.37,605.40 L3006.71,607.09 L3007.10,608.71 L3007.56,610.26 L3008.07,611.73 L3008.63,613.12 L3009.25,614.43 L3009.92,615.66 L3010.64,616.80 L3011.41,617.85 L3012.23,618.81 L3013.10,619.68 L3014.01,620.45 L3014.96,621.12 L3015.96,621.69 L3017.00,622.16 L3018.09,622.53 L3019.23,622.79 L3020.46,622.95 L3021.90,623.00 L3023.34,622.95 L3024.57,622.79 L3025.71,622.53 L3026.80,622.16 L3027.84,621.69 L3028.84,621.12 L3029.79,620.45 L3030.70,619.68 L3031.57,618.81 L3032.39,617.85 L3033.16,616.80 L3033.88,615.66 L3034.55,614.43 L3035.17,613.12 L3035.73,611.73 L3036.24,610.26 L3036.70,608.71 L3037.09,607.09 L3037.43,605.40 L3037.71,603.63 L3037.92,601.78 L3038.08,599.83 L3038.17,597.75 Z"/></svg><svg class="r" style="left:0;top:0;overflow:visible" width="1" height="1"><text x="3070.08" y="631.90" font-size="60.80" fill="#86bd72" letter-spacing="3.331" stroke="#86bd72" stroke-width="1.60" stroke-linejoin="round">hours</text></svg><svg class="r" style="left:0;top:0;overflow:visible" width="1" height="1"><path fill-rule="evenodd" fill="#86bd72" d="M2903.74,862.50 L2917.54,862.50 L2917.54,937.10 L2905.83,937.10 L2905.83,873.17 L2887.70,885.85 L2887.70,873.84 Z M2967.14,862.50 L2980.94,862.50 L2980.94,937.10 L2969.23,937.10 L2969.23,873.17 L2951.10,885.85 L2951.10,873.84 Z"/></svg><svg class="r" style="left:0;top:0;overflow:visible" width="1" height="1"><circle cx="2940.8" cy="929.50" r="7.8" fill="#86bd72"/></svg><svg class="r" style="left:0;top:0;overflow:visible" width="1" height="1"><path fill-rule="evenodd" fill="#86bd72" d="M3049.20,899.80 L3049.15,903.16 L3048.99,906.00 L3048.73,908.67 L3048.37,911.20 L3047.91,913.62 L3047.34,915.94 L3046.68,918.15 L3045.92,920.27 L3045.07,922.28 L3044.12,924.18 L3043.09,925.97 L3041.96,927.65 L3040.75,929.21 L3039.46,930.65 L3038.09,931.97 L3036.64,933.15 L3035.12,934.21 L3033.52,935.12 L3031.85,935.91 L3030.11,936.55 L3028.29,937.05 L3026.37,937.41 L3024.32,937.63 L3021.90,937.70 L3019.48,937.63 L3017.43,937.41 L3015.51,937.05 L3013.69,936.55 L3011.95,935.91 L3010.28,935.12 L3008.68,934.21 L3007.16,933.15 L3005.71,931.97 L3004.34,930.65 L3003.05,929.21 L3001.84,927.65 L3000.71,925.97 L2999.68,924.18 L2998.73,922.28 L2997.88,920.27 L2997.12,918.15 L2996.46,915.94 L2995.89,913.62 L2995.43,911.20 L2995.07,908.67 L2994.81,906.00 L2994.65,903.16 L2994.60,899.80 L2994.65,896.44 L2994.81,893.60 L2995.07,890.93 L2995.43,888.40 L2995.89,885.98 L2996.46,883.66 L2997.12,881.45 L2997.88,879.33 L2998.73,877.32 L2999.68,875.42 L3000.71,873.63 L3001.84,871.95 L3003.05,870.39 L3004.34,868.95 L3005.71,867.63 L3007.16,866.45 L3008.68,865.39 L3010.28,864.48 L3011.95,863.69 L3013.69,863.05 L3015.51,862.55 L3017.43,862.19 L3019.48,861.97 L3021.90,861.90 L3024.32,861.97 L3026.37,862.19 L3028.29,862.55 L3030.11,863.05 L3031.85,863.69 L3033.52,864.48 L3035.12,865.39 L3036.64,866.45 L3038.09,867.63 L3039.46,868.95 L3040.75,870.39 L3041.96,871.95 L3043.09,873.63 L3044.12,875.42 L3045.07,877.32 L3045.92,879.33 L3046.68,881.45 L3047.34,883.66 L3047.91,885.98 L3048.37,888.40 L3048.73,890.93 L3048.99,893.60 L3049.15,896.44 Z M3038.20,899.80 L3038.17,897.35 L3038.08,895.27 L3037.92,893.32 L3037.71,891.47 L3037.43,889.70 L3037.09,888.01 L3036.70,886.39 L3036.24,884.84 L3035.73,883.37 L3035.17,881.98 L3034.55,880.67 L3033.88,879.44 L3033.16,878.30 L3032.39,877.25 L3031.57,876.29 L3030.70,875.42 L3029.79,874.65 L3028.84,873.98 L3027.84,873.41 L3026.80,872.94 L3025.71,872.57 L3024.57,872.31 L3023.34,872.15 L3021.90,872.10 L3020.46,872.15 L3019.23,872.31 L3018.09,872.57 L3017.00,872.94 L3015.96,873.41 L3014.96,873.98 L3014.01,874.65 L3013.10,875.42 L3012.23,876.29 L3011.41,877.25 L3010.64,878.30 L3009.92,879.44 L3009.25,880.67 L3008.63,881.98 L3008.07,883.37 L3007.56,884.84 L3007.10,886.39 L3006.71,888.01 L3006.37,889.70 L3006.09,891.47 L3005.88,893.32 L3005.72,895.27 L3005.63,897.35 L3005.60,899.80 L3005.63,902.25 L3005.72,904.33 L3005.88,906.28 L3006.09,908.13 L3006.37,909.90 L3006.71,911.59 L3007.10,913.21 L3007.56,914.76 L3008.07,916.23 L3008.63,917.62 L3009.25,918.93 L3009.92,920.16 L3010.64,921.30 L3011.41,922.35 L3012.23,923.31 L3013.10,924.18 L3014.01,924.95 L3014.96,925.62 L3015.96,926.19 L3017.00,926.66 L3018.09,927.03 L3019.23,927.29 L3020.46,927.45 L3021.90,927.50 L3023.34,927.45 L3024.57,927.29 L3025.71,927.03 L3026.80,926.66 L3027.84,926.19 L3028.84,925.62 L3029.79,924.95 L3030.70,924.18 L3031.57,923.31 L3032.39,922.35 L3033.16,921.30 L3033.88,920.16 L3034.55,918.93 L3035.17,917.62 L3035.73,916.23 L3036.24,914.76 L3036.70,913.21 L3037.09,911.59 L3037.43,909.90 L3037.71,908.13 L3037.92,906.28 L3038.08,904.33 L3038.17,902.25 Z"/></svg><svg class="r" style="left:0;top:0;overflow:visible" width="1" height="1"><text x="3070.08" y="936.40" font-size="60.80" fill="#86bd72" letter-spacing="3.331" stroke="#86bd72" stroke-width="1.60" stroke-linejoin="round">hours</text></svg><svg class="r" style="left:0;top:0" width="1400" height="1780"><rect x="102.5" y="1174.4" width="1259.5" height="2" fill="rgba(204,204,220,0.09)"/><rect x="102.5" y="1272.3" width="1259.5" height="2" fill="rgba(204,204,220,0.09)"/><rect x="102.5" y="1369.9" width="1259.5" height="2" fill="rgba(204,204,220,0.09)"/><rect x="102.5" y="1467.5" width="1259.5" height="2" fill="rgba(204,204,220,0.09)"/><rect x="102.5" y="1565.1" width="1259.5" height="2" fill="rgba(204,204,220,0.09)"/><rect x="102.5" y="1662.3" width="1259.5" height="2" fill="rgba(204,204,220,0.09)"/><rect x="114.3" y="1126.5" width="2" height="594" fill="rgba(204,204,220,0.09)"/><rect x="219.3" y="1126.5" width="2" height="594" fill="rgba(204,204,220,0.09)"/><rect x="324.4" y="1126.5" width="2" height="594" fill="rgba(204,204,220,0.09)"/><rect x="429.4" y="1126.5" width="2" height="594" fill="rgba(204,204,220,0.09)"/><rect x="534.5" y="1126.5" width="2" height="594" fill="rgba(204,204,220,0.09)"/><rect x="639.5" y="1126.5" width="2" height="594" fill="rgba(204,204,220,0.09)"/><rect x="744.5" y="1126.5" width="2" height="594" fill="rgba(204,204,220,0.09)"/><rect x="849.6" y="1126.5" width="2" height="594" fill="rgba(204,204,220,0.09)"/><rect x="954.6" y="1126.5" width="2" height="594" fill="rgba(204,204,220,0.09)"/><rect x="1059.7" y="1126.5" width="2" height="594" fill="rgba(204,204,220,0.09)"/><rect x="1164.7" y="1126.5" width="2" height="594" fill="rgba(204,204,220,0.09)"/><rect x="1269.7" y="1126.5" width="2" height="594" fill="rgba(204,204,220,0.09)"/><rect x="881" y="1175.4" width="480.8" height="539.5" fill="rgba(135,191,113,0.2)"/><rect x="685" y="1663.3" width="676.8" height="51.6" fill="rgba(242,204,76,0.2)"/><rect x="1109" y="1663.3" width="252.8" height="51.6" fill="rgba(138,184,255,0.2)"/><rect x="881" y="1172.2" width="480.8" height="6" fill="#87bf71"/><rect x="685" y="1660.2" width="424" height="6" fill="#f2cc4c"/><rect x="1109" y="1660.2" width="252.8" height="6" fill="#8ab8ff"/></svg><svg class="r" style="left:0;top:0;overflow:visible" width="1" height="1"><text x="77.56" y="1182.00" font-size="25.58" fill="#ccccdc" letter-spacing="0.000" stroke="#ccccdc" stroke-width="0.20" stroke-linejoin="round">2</text></svg><svg class="r" style="left:0;top:0;overflow:visible" width="1" height="1"><text x="56.05" y="1279.90" font-size="25.58" fill="#ccccdc" letter-spacing="0.000" stroke="#ccccdc" stroke-width="0.20" stroke-linejoin="round">1.8</text></svg><svg class="r" style="left:0;top:0;overflow:visible" width="1" height="1"><text x="56.06" y="1377.50" font-size="25.58" fill="#ccccdc" letter-spacing="0.000" stroke="#ccccdc" stroke-width="0.20" stroke-linejoin="round">1.6</text></svg><svg class="r" style="left:0;top:0;overflow:visible" width="1" height="1"><text x="55.69" y="1475.10" font-size="25.58" fill="#ccccdc" letter-spacing="0.000" stroke="#ccccdc" stroke-width="0.20" stroke-linejoin="round">1.4</text></svg><svg class="r" style="left:0;top:0;overflow:visible" width="1" height="1"><text x="56.22" y="1572.70" font-size="25.58" fill="#ccccdc" letter-spacing="0.000" stroke="#ccccdc" stroke-width="0.20" stroke-linejoin="round">1.2</text></svg><svg class="r" style="left:0;top:0;overflow:visible" width="1" height="1"><text x="77.52" y="1669.90" font-size="25.58" fill="#ccccdc" letter-spacing="0.000" stroke="#ccccdc" stroke-width="0.20" stroke-linejoin="round">1</text></svg><svg class="r" style="left:0;top:0;overflow:visible" width="1" height="1"><text x="82.82" y="1749.10" font-size="25.58" fill="#ccccdc" letter-spacing="0.000" stroke="#ccccdc" stroke-width="0.20" stroke-linejoin="round">12:30</text></svg><svg class="r" style="left:0;top:0;overflow:visible" width="1" height="1"><text x="187.86" y="1749.10" font-size="25.58" fill="#ccccdc" letter-spacing="0.000" stroke="#ccccdc" stroke-width="0.20" stroke-linejoin="round">13:00</text></svg><svg class="r" style="left:0;top:0;overflow:visible" width="1" height="1"><text x="292.90" y="1749.10" font-size="25.58" fill="#ccccdc" letter-spacing="0.000" stroke="#ccccdc" stroke-width="0.20" stroke-linejoin="round">13:30</text></svg><svg class="r" style="left:0;top:0;overflow:visible" width="1" height="1"><text x="397.94" y="1749.10" font-size="25.58" fill="#ccccdc" letter-spacing="0.000" stroke="#ccccdc" stroke-width="0.20" stroke-linejoin="round">14:00</text></svg><svg class="r" style="left:0;top:0;overflow:visible" width="1" height="1"><text x="502.98" y="1749.10" font-size="25.58" fill="#ccccdc" letter-spacing="0.000" stroke="#ccccdc" stroke-width="0.20" stroke-linejoin="round">14:30</text></svg><svg class="r" style="left:0;top:0;overflow:visible" width="1" height="1"><text x="608.02" y="1749.10" font-size="25.58" fill="#ccccdc" letter-spacing="0.000" stroke="#ccccdc" stroke-width="0.20" stroke-linejoin="round">15:00</text></svg><svg class="r" style="left:0;top:0;overflow:visible" width="1" height="1"><text x="713.06" y="1749.10" font-size="25.58" fill="#ccccdc" letter-spacing="0.000" stroke="#ccccdc" stroke-width="0.20" stroke-linejoin="round">15:30</text></svg><svg class="r" style="left:0;top:0;overflow:visible" width="1" height="1"><text x="818.10" y="1749.10" font-size="25.58" fill="#ccccdc" letter-spacing="0.000" stroke="#ccccdc" stroke-width="0.20" stroke-linejoin="round">16:00</text></svg><svg class="r" style="left:0;top:0;overflow:visible" width="1" height="1"><text x="923.14" y="1749.10" font-size="25.58" fill="#ccccdc" letter-spacing="0.000" stroke="#ccccdc" stroke-width="0.20" stroke-linejoin="round">16:30</text></svg><svg class="r" style="left:0;top:0;overflow:visible" width="1" height="1"><text x="1028.18" y="1749.10" font-size="25.58" fill="#ccccdc" letter-spacing="0.000" stroke="#ccccdc" stroke-width="0.20" stroke-linejoin="round">17:00</text></svg><svg class="r" style="left:0;top:0;overflow:visible" width="1" height="1"><text x="1133.22" y="1749.10" font-size="25.58" fill="#ccccdc" letter-spacing="0.000" stroke="#ccccdc" stroke-width="0.20" stroke-linejoin="round">17:30</text></svg><svg class="r" style="left:0;top:0;overflow:visible" width="1" height="1"><text x="1238.26" y="1749.10" font-size="25.58" fill="#ccccdc" letter-spacing="0.000" stroke="#ccccdc" stroke-width="0.20" stroke-linejoin="round">18:00</text></svg><svg class="r" style="left:0;top:0" width="3360" height="1400"><rect x="2170.5" y="1142.1" width="1123.5" height="2" fill="rgba(204,204,220,0.09)"/><rect x="2170.5" y="1228.0" width="1123.5" height="2" fill="rgba(204,204,220,0.09)"/><rect x="2170.5" y="1313.9" width="1123.5" height="2" fill="rgba(204,204,220,0.09)"/><rect x="2274.4" y="1126.5" width="2" height="214" fill="rgba(204,204,220,0.09)"/><rect x="2461.8" y="1126.5" width="2" height="214" fill="rgba(204,204,220,0.09)"/><rect x="2649.3" y="1126.5" width="2" height="214" fill="rgba(204,204,220,0.09)"/><rect x="2836.7" y="1126.5" width="2" height="214" fill="rgba(204,204,220,0.09)"/><rect x="3024.1" y="1126.5" width="2" height="214" fill="rgba(204,204,220,0.09)"/><rect x="3211.6" y="1126.5" width="2" height="214" fill="rgba(204,204,220,0.09)"/><rect x="2865" y="1143" width="428.5" height="190" fill="rgba(135,191,113,0.06)"/><rect x="2690" y="1315" width="603.5" height="18" fill="rgba(242,204,76,0.05)"/><rect x="3068" y="1315" width="225.5" height="18" fill="rgba(138,184,255,0.06)"/><rect x="2865" y="1142" width="428.5" height="2.4" fill="#87bf71"/><rect x="2690" y="1313.8" width="378" height="2.4" fill="#f2cc4c"/><rect x="3068" y="1313.8" width="225.5" height="2.4" fill="#8ab8ff"/></svg><svg class="r" style="left:0;top:0;overflow:visible" width="1" height="1"><text x="2146.06" y="1149.70" font-size="25.58" fill="#ccccdc" letter-spacing="0.000" stroke="#ccccdc" stroke-width="0.20" stroke-linejoin="round">2</text></svg><svg class="r" style="left:0;top:0;overflow:visible" width="1" height="1"><text x="2124.51" y="1235.60" font-size="25.58" fill="#ccccdc" letter-spacing="0.000" stroke="#ccccdc" stroke-width="0.20" stroke-linejoin="round">1.5</text></svg><svg class="r" style="left:0;top:0;overflow:visible" width="1" height="1"><text x="2146.02" y="1321.50" font-size="25.58" fill="#ccccdc" letter-spacing="0.000" stroke="#ccccdc" stroke-width="0.20" stroke-linejoin="round">1</text></svg><svg class="r" style="left:0;top:0;overflow:visible" width="1" height="1"><text x="2242.92" y="1368.50" font-size="25.58" fill="#ccccdc" letter-spacing="0.000" stroke="#ccccdc" stroke-width="0.20" stroke-linejoin="round">13:00</text></svg><svg class="r" style="left:0;top:0;overflow:visible" width="1" height="1"><text x="2430.35" y="1368.50" font-size="25.58" fill="#ccccdc" letter-spacing="0.000" stroke="#ccccdc" stroke-width="0.20" stroke-linejoin="round">14:00</text></svg><svg class="r" style="left:0;top:0;overflow:visible" width="1" height="1"><text x="2617.78" y="1368.50" font-size="25.58" fill="#ccccdc" letter-spacing="0.000" stroke="#ccccdc" stroke-width="0.20" stroke-linejoin="round">15:00</text></svg><svg class="r" style="left:0;top:0;overflow:visible" width="1" height="1"><text x="2805.21" y="1368.50" font-size="25.58" fill="#ccccdc" letter-spacing="0.000" stroke="#ccccdc" stroke-width="0.20" stroke-linejoin="round">16:00</text></svg><svg class="r" style="left:0;top:0;overflow:visible" width="1" height="1"><text x="2992.64" y="1368.50" font-size="25.58" fill="#ccccdc" letter-spacing="0.000" stroke="#ccccdc" stroke-width="0.20" stroke-linejoin="round">17:00</text></svg><svg class="r" style="left:0;top:0;overflow:visible" width="1" height="1"><text x="3180.07" y="1368.50" font-size="25.58" fill="#ccccdc" letter-spacing="0.000" stroke="#ccccdc" stroke-width="0.20" stroke-linejoin="round">18:00</text></svg><svg class="r" style="left:0;top:0;overflow:visible" width="1" height="1"><text x="2647.03" y="1635.00" font-size="38.66" fill="#9d9da9" letter-spacing="-0.374" stroke="#9d9da9" stroke-width="0.60" stroke-linejoin="round">No data</text></svg></div></body></html>
